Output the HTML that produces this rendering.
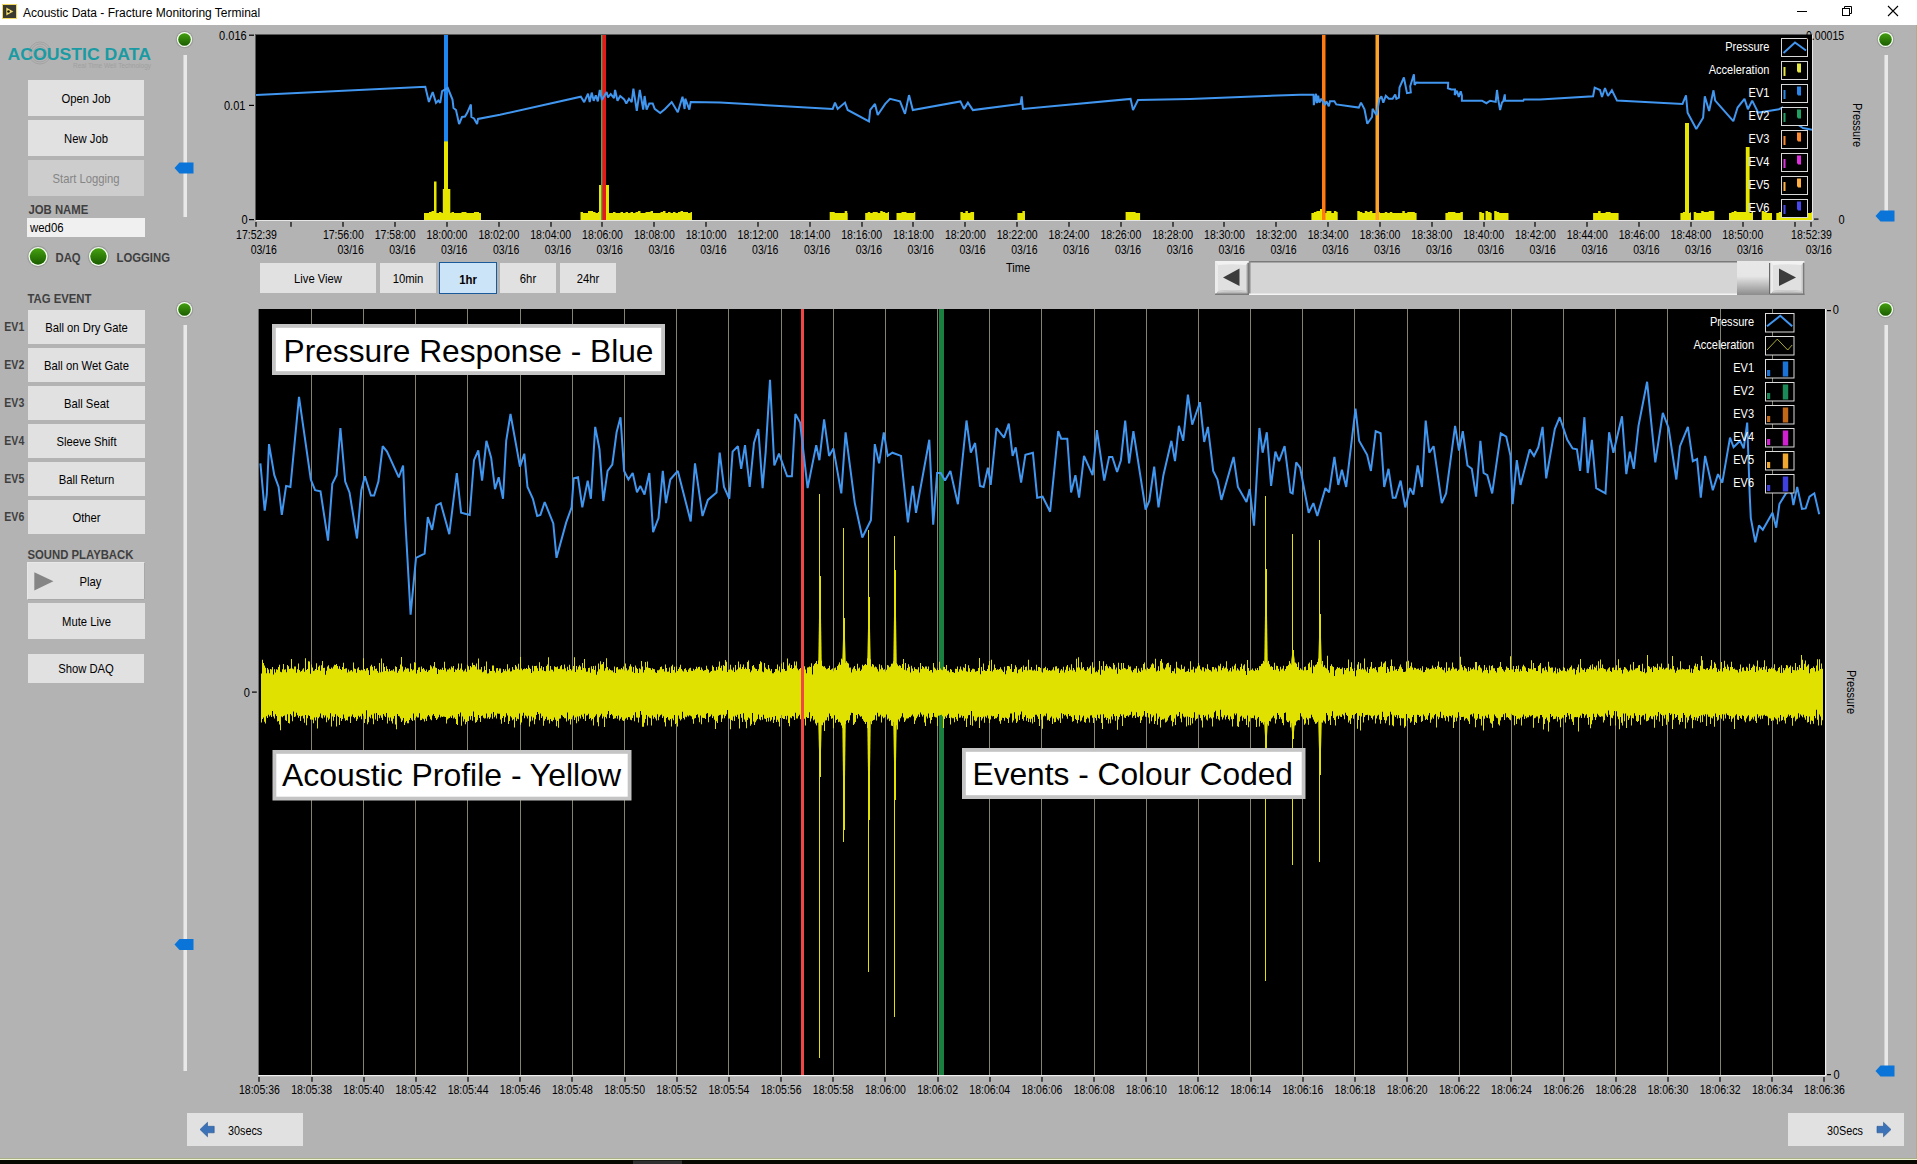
<!DOCTYPE html>
<html><head><meta charset="utf-8"><title>Acoustic Data - Fracture Monitoring Terminal</title>
<style>html,body{margin:0;padding:0;width:1917px;height:1164px;overflow:hidden;background:#b3b3b3;font-family:"Liberation Sans", sans-serif;}</style>
</head><body><svg width="1917" height="1164" viewBox="0 0 1917 1164" style="position:absolute;left:0;top:0;font-family:&quot;Liberation Sans&quot;, sans-serif" shape-rendering="auto"><rect x="0" y="0" width="1917" height="25" fill="#ffffff" /><rect x="2.5" y="4.5" width="14" height="14" fill="#3a3a30" stroke="#f0d860" stroke-width="1"/><path d="M6 7 L14 11.5 L6 16 Z" fill="#f5e070" stroke="#222" stroke-width="0.6"/><circle cx="8.5" cy="11.5" r="1.3" fill="#111"/><g transform="translate(23,17) scale(1.0,1)"><text x="0" y="0" font-size="12" fill="#000" text-anchor="start" font-weight="normal" >Acoustic Data - Fracture Monitoring Terminal</text></g><rect x="1797" y="11" width="10" height="1" fill="#000" /><rect x="1842.5" y="8.5" width="7" height="7" fill="none" stroke="#000" stroke-width="1"/><path d="M1844.5 8.5 V6.5 H1851.5 V13.5 H1849.5" fill="none" stroke="#000" stroke-width="1"/><path d="M1888 6 L1898 16 M1898 6 L1888 16" stroke="#000" stroke-width="1.1"/><g fill="none" stroke="#9a9a9a" stroke-width="0.8" opacity="0.8"><circle cx="40" cy="53" r="4"/><circle cx="40" cy="53" r="6.5"/><circle cx="40" cy="53" r="9"/><circle cx="40" cy="53" r="11"/></g><text x="7.5" y="59.6" font-size="16.2" font-weight="bold" fill="#1a9ba3" textLength="143.5" lengthAdjust="spacingAndGlyphs">ACOUSTIC DATA</text><text x="73" y="67.5" font-size="6.5" fill="#a0a0a0" textLength="78" lengthAdjust="spacingAndGlyphs">Real Time Well Technology</text><rect x="28" y="80" width="116" height="36" fill="#e1e1e1" /><g transform="translate(86.0,102.9) scale(0.94,1)"><text x="0" y="0" font-size="12" fill="#000" text-anchor="middle" font-weight="normal" >Open Job</text></g><rect x="28" y="120" width="116" height="36" fill="#e1e1e1" /><g transform="translate(86.0,142.9) scale(0.94,1)"><text x="0" y="0" font-size="12" fill="#000" text-anchor="middle" font-weight="normal" >New Job</text></g><rect x="28" y="160" width="116" height="36" fill="#cdcdcd" /><g transform="translate(86.0,182.9) scale(0.94,1)"><text x="0" y="0" font-size="12" fill="#858585" text-anchor="middle" font-weight="normal" >Start Logging</text></g><g transform="translate(28.5,214) scale(0.945,1)"><text x="0" y="0" font-size="12" fill="#3f3f3f" text-anchor="start" font-weight="bold" >JOB NAME</text></g><rect x="27" y="218" width="118" height="19" fill="#f0f0f0" /><g transform="translate(30,232) scale(0.95,1)"><text x="0" y="0" font-size="12" fill="#000" text-anchor="start" font-weight="normal" >wed06</text></g><circle cx="38" cy="256.5" r="10.7" fill="#000" opacity="0.12"/><circle cx="38" cy="256.5" r="9.5" fill="#f4fff0"/><circle cx="38" cy="256.5" r="8.2" fill="url(#ledg)"/><g transform="translate(55.5,262) scale(0.945,1)"><text x="0" y="0" font-size="12" fill="#3f3f3f" text-anchor="start" font-weight="bold" >DAQ</text></g><circle cx="98.5" cy="256.5" r="10.7" fill="#000" opacity="0.12"/><circle cx="98.5" cy="256.5" r="9.5" fill="#f4fff0"/><circle cx="98.5" cy="256.5" r="8.2" fill="url(#ledg)"/><g transform="translate(116.5,262) scale(0.945,1)"><text x="0" y="0" font-size="12" fill="#3f3f3f" text-anchor="start" font-weight="bold" >LOGGING</text></g><g transform="translate(27.5,302.7) scale(0.945,1)"><text x="0" y="0" font-size="12" fill="#3f3f3f" text-anchor="start" font-weight="bold" >TAG EVENT</text></g><rect x="28" y="310" width="117" height="34" fill="#e1e1e1" /><g transform="translate(86.5,331.9) scale(0.94,1)"><text x="0" y="0" font-size="12" fill="#000" text-anchor="middle" font-weight="normal" >Ball on Dry Gate</text></g><g transform="translate(4.3,331) scale(0.88,1)"><text x="0" y="0" font-size="12" fill="#3f3f3f" text-anchor="start" font-weight="bold" >EV1</text></g><rect x="28" y="348" width="117" height="34" fill="#e1e1e1" /><g transform="translate(86.5,369.9) scale(0.94,1)"><text x="0" y="0" font-size="12" fill="#000" text-anchor="middle" font-weight="normal" >Ball on Wet Gate</text></g><g transform="translate(4.3,369) scale(0.88,1)"><text x="0" y="0" font-size="12" fill="#3f3f3f" text-anchor="start" font-weight="bold" >EV2</text></g><rect x="28" y="386" width="117" height="34" fill="#e1e1e1" /><g transform="translate(86.5,407.9) scale(0.94,1)"><text x="0" y="0" font-size="12" fill="#000" text-anchor="middle" font-weight="normal" >Ball Seat</text></g><g transform="translate(4.3,407) scale(0.88,1)"><text x="0" y="0" font-size="12" fill="#3f3f3f" text-anchor="start" font-weight="bold" >EV3</text></g><rect x="28" y="424" width="117" height="34" fill="#e1e1e1" /><g transform="translate(86.5,445.9) scale(0.94,1)"><text x="0" y="0" font-size="12" fill="#000" text-anchor="middle" font-weight="normal" >Sleeve Shift</text></g><g transform="translate(4.3,445) scale(0.88,1)"><text x="0" y="0" font-size="12" fill="#3f3f3f" text-anchor="start" font-weight="bold" >EV4</text></g><rect x="28" y="462" width="117" height="34" fill="#e1e1e1" /><g transform="translate(86.5,483.9) scale(0.94,1)"><text x="0" y="0" font-size="12" fill="#000" text-anchor="middle" font-weight="normal" >Ball Return</text></g><g transform="translate(4.3,483) scale(0.88,1)"><text x="0" y="0" font-size="12" fill="#3f3f3f" text-anchor="start" font-weight="bold" >EV5</text></g><rect x="28" y="500" width="117" height="34" fill="#e1e1e1" /><g transform="translate(86.5,521.9) scale(0.94,1)"><text x="0" y="0" font-size="12" fill="#000" text-anchor="middle" font-weight="normal" >Other</text></g><g transform="translate(4.3,521) scale(0.88,1)"><text x="0" y="0" font-size="12" fill="#3f3f3f" text-anchor="start" font-weight="bold" >EV6</text></g><g transform="translate(27.5,558.6) scale(0.945,1)"><text x="0" y="0" font-size="12" fill="#3f3f3f" text-anchor="start" font-weight="bold" >SOUND PLAYBACK</text></g><rect x="27" y="562" width="118" height="38" fill="#e1e1e1" /><path d="M27.5 599.5 V562.5 H144.5" fill="none" stroke="#e8e8e8" stroke-width="1"/><path d="M27.5 599.5 H144.5 V562.5" fill="none" stroke="#a8a8a8" stroke-width="1"/><path d="M34.3 572.3 L53.4 581.3 L34.3 590.4 Z" fill="#858585"/><g transform="translate(90.5,585.5) scale(0.94,1)"><text x="0" y="0" font-size="12" fill="#000" text-anchor="middle" font-weight="normal" >Play</text></g><rect x="28" y="603" width="117" height="36" fill="#e1e1e1" /><g transform="translate(86.5,625.9) scale(0.94,1)"><text x="0" y="0" font-size="12" fill="#000" text-anchor="middle" font-weight="normal" >Mute Live</text></g><rect x="28" y="654" width="116" height="29" fill="#e1e1e1" /><g transform="translate(86.0,673.4) scale(0.94,1)"><text x="0" y="0" font-size="12" fill="#000" text-anchor="middle" font-weight="normal" >Show DAQ</text></g><circle cx="184.5" cy="39.5" r="8.799999999999999" fill="#000" opacity="0.12"/><circle cx="184.5" cy="39.5" r="7.6" fill="#f4fff0"/><circle cx="184.5" cy="39.5" r="6.3" fill="url(#ledg)"/><rect x="183" y="55" width="4" height="162" fill="#e8e8e8" /><rect x="183" y="55" width="1" height="162" fill="#d0d0d0"/><path d="M174.5 168 L179.5 162.5 H193.5 V173.5 H179.5 Z" fill="#0b74d9"/><circle cx="184.5" cy="309.5" r="8.799999999999999" fill="#000" opacity="0.12"/><circle cx="184.5" cy="309.5" r="7.6" fill="#f4fff0"/><circle cx="184.5" cy="309.5" r="6.3" fill="url(#ledg)"/><rect x="183" y="325" width="4" height="746" fill="#e8e8e8" /><rect x="183" y="325" width="1" height="746" fill="#d0d0d0"/><path d="M174.5 944.5 L179.5 939.0 H193.5 V950.0 H179.5 Z" fill="#0b74d9"/><circle cx="1885.5" cy="39.5" r="8.799999999999999" fill="#000" opacity="0.12"/><circle cx="1885.5" cy="39.5" r="7.6" fill="#f4fff0"/><circle cx="1885.5" cy="39.5" r="6.3" fill="url(#ledg)"/><rect x="1884" y="55" width="4" height="160" fill="#e8e8e8" /><rect x="1884" y="55" width="1" height="160" fill="#d0d0d0"/><path d="M1875.5 216 L1880.5 210.5 H1894.5 V221.5 H1880.5 Z" fill="#0b74d9"/><circle cx="1885.5" cy="309.5" r="8.799999999999999" fill="#000" opacity="0.12"/><circle cx="1885.5" cy="309.5" r="7.6" fill="#f4fff0"/><circle cx="1885.5" cy="309.5" r="6.3" fill="url(#ledg)"/><rect x="1884" y="325" width="4" height="741" fill="#e8e8e8" /><rect x="1884" y="325" width="1" height="741" fill="#d0d0d0"/><path d="M1875.5 1071 L1880.5 1065.5 H1894.5 V1076.5 H1880.5 Z" fill="#0b74d9"/><rect x="255" y="34" width="1557" height="186" fill="#5a5a5a" /><rect x="256" y="35" width="1556" height="185" fill="#000" /><rect x="256" y="220" width="1557" height="1" fill="#e6e6e6" /><rect x="1812" y="35" width="1" height="186" fill="#e6e6e6" /><clipPath id="ctop"><rect x="256" y="35" width="1556" height="185"/></clipPath><g clip-path="url(#ctop)"><polygon points="424.0,220.0 424.0,213.0 426.5,213.0 426.5,213.0 429.0,213.0 429.0,212.0 431.5,212.0 431.5,211.0 434.0,211.0 434.0,213.0 436.5,213.0 436.5,213.0 439.0,213.0 439.0,212.0 441.5,212.0 441.5,213.0 444.0,213.0 444.0,213.0 446.5,213.0 446.5,212.0 449.0,212.0 449.0,213.0 451.5,213.0 451.5,212.0 454.0,212.0 454.0,213.0 456.5,213.0 456.5,213.0 459.0,213.0 459.0,213.0 461.5,213.0 461.5,212.0 464.0,212.0 464.0,212.0 466.5,212.0 466.5,213.0 469.0,213.0 469.0,213.0 471.5,213.0 471.5,213.0 474.0,213.0 474.0,212.0 476.5,212.0 476.5,212.0 479.0,212.0 479.0,213.0 481.0,213.0 481.0,220.0" fill="#e6e600"/><polygon points="580.5,220.0 580.5,212.0 583.0,212.0 583.0,213.0 585.5,213.0 585.5,213.0 588.0,213.0 588.0,211.0 590.5,211.0 590.5,211.0 593.0,211.0 593.0,212.0 595.5,212.0 595.5,213.0 598.0,213.0 598.0,212.0 600.5,212.0 600.5,212.0 603.0,212.0 603.0,212.0 605.5,212.0 605.5,213.0 608.0,213.0 608.0,213.0 610.5,213.0 610.5,213.0 613.0,213.0 613.0,212.0 615.5,212.0 615.5,213.0 618.0,213.0 618.0,213.0 620.5,213.0 620.5,212.0 623.0,212.0 623.0,213.0 625.5,213.0 625.5,212.0 628.0,212.0 628.0,213.0 630.5,213.0 630.5,212.0 633.0,212.0 633.0,213.0 635.5,213.0 635.5,212.0 638.0,212.0 638.0,211.0 640.5,211.0 640.5,213.0 643.0,213.0 643.0,213.0 645.5,213.0 645.5,212.0 648.0,212.0 648.0,212.0 650.5,212.0 650.5,211.0 653.0,211.0 653.0,213.0 655.5,213.0 655.5,213.0 658.0,213.0 658.0,213.0 660.5,213.0 660.5,212.0 663.0,212.0 663.0,211.0 665.5,211.0 665.5,213.0 668.0,213.0 668.0,212.0 670.5,212.0 670.5,213.0 673.0,213.0 673.0,212.0 675.5,212.0 675.5,213.0 678.0,213.0 678.0,212.0 680.5,212.0 680.5,211.0 683.0,211.0 683.0,212.0 685.5,212.0 685.5,212.0 688.0,212.0 688.0,213.0 690.5,213.0 690.5,212.0 692.0,212.0 692.0,220.0" fill="#e6e600"/><polygon points="829.7,220.0 829.7,212.0 832.2,212.0 832.2,212.0 834.7,212.0 834.7,213.0 837.2,213.0 837.2,213.0 839.7,213.0 839.7,213.0 842.2,213.0 842.2,213.0 844.7,213.0 844.7,211.0 847.2,211.0 847.2,213.0 847.7,213.0 847.7,220.0" fill="#e6e600"/><polygon points="865.2,220.0 865.2,213.0 867.7,213.0 867.7,212.0 870.2,212.0 870.2,213.0 872.7,213.0 872.7,212.0 875.2,212.0 875.2,212.0 877.7,212.0 877.7,213.0 880.2,213.0 880.2,211.0 882.7,211.0 882.7,212.0 885.2,212.0 885.2,213.0 887.7,213.0 887.7,212.0 889.0,212.0 889.0,220.0" fill="#e6e600"/><polygon points="896.5,220.0 896.5,213.0 899.0,213.0 899.0,213.0 901.5,213.0 901.5,212.0 904.0,212.0 904.0,212.0 906.5,212.0 906.5,213.0 909.0,213.0 909.0,213.0 911.5,213.0 911.5,213.0 914.0,213.0 914.0,212.0 915.3,212.0 915.3,220.0" fill="#e6e600"/><polygon points="960.4,220.0 960.4,212.0 962.9,212.0 962.9,213.0 965.4,213.0 965.4,211.0 967.9,211.0 967.9,213.0 970.4,213.0 970.4,212.0 972.9,212.0 972.9,212.0 974.1,212.0 974.1,220.0" fill="#e6e600"/><polygon points="1017.4,220.0 1017.4,213.0 1019.9,213.0 1019.9,213.0 1022.4,213.0 1022.4,211.0 1024.9,211.0 1024.9,213.0 1025.0,213.0 1025.0,220.0" fill="#e6e600"/><polygon points="1125.6,220.0 1125.6,212.0 1128.1,212.0 1128.1,212.0 1130.6,212.0 1130.6,212.0 1133.1,212.0 1133.1,212.0 1135.6,212.0 1135.6,213.0 1138.1,213.0 1138.1,213.0 1140.1,213.0 1140.1,220.0" fill="#e6e600"/><polygon points="1311.4,220.0 1311.4,213.0 1313.9,213.0 1313.9,212.0 1316.4,212.0 1316.4,211.0 1318.9,211.0 1318.9,211.0 1321.4,211.0 1321.4,213.0 1323.9,213.0 1323.9,213.0 1326.4,213.0 1326.4,211.0 1328.9,211.0 1328.9,211.0 1331.4,211.0 1331.4,213.0 1333.9,213.0 1333.9,211.0 1336.4,211.0 1336.4,212.0 1337.7,212.0 1337.7,220.0" fill="#e6e600"/><polygon points="1357.3,220.0 1357.3,211.0 1359.8,211.0 1359.8,212.0 1362.3,212.0 1362.3,213.0 1364.8,213.0 1364.8,211.0 1367.3,211.0 1367.3,212.0 1369.8,212.0 1369.8,211.0 1372.3,211.0 1372.3,213.0 1374.8,213.0 1374.8,213.0 1377.3,213.0 1377.3,212.0 1379.8,212.0 1379.8,213.0 1382.3,213.0 1382.3,213.0 1384.8,213.0 1384.8,212.0 1387.3,212.0 1387.3,213.0 1389.8,213.0 1389.8,212.0 1392.3,212.0 1392.3,213.0 1394.8,213.0 1394.8,213.0 1397.3,213.0 1397.3,213.0 1399.8,213.0 1399.8,213.0 1402.3,213.0 1402.3,211.0 1404.8,211.0 1404.8,213.0 1407.3,213.0 1407.3,212.0 1409.8,212.0 1409.8,212.0 1412.3,212.0 1412.3,212.0 1414.8,212.0 1414.8,213.0 1416.6,213.0 1416.6,220.0" fill="#e6e600"/><polygon points="1445.4,220.0 1445.4,213.0 1447.9,213.0 1447.9,212.0 1450.4,212.0 1450.4,212.0 1452.9,212.0 1452.9,212.0 1455.4,212.0 1455.4,213.0 1457.9,213.0 1457.9,213.0 1460.4,213.0 1460.4,212.0 1462.9,212.0 1462.9,220.0" fill="#e6e600"/><polygon points="1479.2,220.0 1479.2,212.0 1481.7,212.0 1481.7,213.0 1484.2,213.0 1484.2,220.0" fill="#e6e600"/><polygon points="1485.5,220.0 1485.5,211.0 1488.0,211.0 1488.0,212.0 1490.5,212.0 1490.5,213.0 1491.7,213.0 1491.7,220.0" fill="#e6e600"/><polygon points="1494.2,220.0 1494.2,211.0 1496.7,211.0 1496.7,212.0 1499.2,212.0 1499.2,213.0 1501.7,213.0 1501.7,213.0 1504.2,213.0 1504.2,213.0 1506.7,213.0 1506.7,213.0 1508.5,213.0 1508.5,220.0" fill="#e6e600"/><polygon points="1593.1,220.0 1593.1,213.0 1595.6,213.0 1595.6,213.0 1598.1,213.0 1598.1,211.0 1600.6,211.0 1600.6,213.0 1603.1,213.0 1603.1,213.0 1605.6,213.0 1605.6,212.0 1608.1,212.0 1608.1,212.0 1610.6,212.0 1610.6,213.0 1613.1,213.0 1613.1,213.0 1615.6,213.0 1615.6,213.0 1618.1,213.0 1618.1,213.0 1618.6,213.0 1618.6,220.0" fill="#e6e600"/><polygon points="1680.4,220.0 1680.4,213.0 1682.9,213.0 1682.9,212.0 1685.4,212.0 1685.4,212.0 1687.9,212.0 1687.9,213.0 1690.4,213.0 1690.4,212.0 1691.0,212.0 1691.0,220.0" fill="#e6e600"/><polygon points="1693.7,220.0 1693.7,212.0 1696.2,212.0 1696.2,213.0 1698.7,213.0 1698.7,213.0 1701.2,213.0 1701.2,211.0 1703.7,211.0 1703.7,212.0 1706.2,212.0 1706.2,212.0 1708.7,212.0 1708.7,211.0 1711.2,211.0 1711.2,211.0 1713.7,211.0 1713.7,211.0 1714.3,211.0 1714.3,220.0" fill="#e6e600"/><polygon points="1729.0,220.0 1729.0,213.0 1731.5,213.0 1731.5,212.0 1734.0,212.0 1734.0,211.0 1736.5,211.0 1736.5,212.0 1739.0,212.0 1739.0,212.0 1741.5,212.0 1741.5,212.0 1744.0,212.0 1744.0,212.0 1746.5,212.0 1746.5,212.0 1749.0,212.0 1749.0,213.0 1751.5,213.0 1751.5,212.0 1753.0,212.0 1753.0,220.0" fill="#e6e600"/><polygon points="1761.7,220.0 1761.7,211.0 1764.2,211.0 1764.2,212.0 1766.7,212.0 1766.7,213.0 1769.2,213.0 1769.2,213.0 1771.7,213.0 1771.7,213.0 1772.0,213.0 1772.0,220.0" fill="#e6e600"/><polygon points="1776.3,220.0 1776.3,213.0 1778.8,213.0 1778.8,212.0 1781.3,212.0 1781.3,213.0 1783.8,213.0 1783.8,213.0 1786.3,213.0 1786.3,213.0 1788.8,213.0 1788.8,212.0 1791.3,212.0 1791.3,213.0 1793.8,213.0 1793.8,213.0 1796.3,213.0 1796.3,213.0 1798.8,213.0 1798.8,212.0 1801.3,212.0 1801.3,213.0 1803.8,213.0 1803.8,212.0 1806.3,212.0 1806.3,213.0 1808.8,213.0 1808.8,213.0 1811.3,213.0 1811.3,212.0 1812.0,212.0 1812.0,220.0" fill="#e6e600"/><rect x="444" y="35" width="4" height="185" fill="#1e86f0" /><rect x="434" y="181.5" width="2.5" height="38.5" fill="#e6e600" /><rect x="442.8" y="189" width="7.5" height="31" fill="#e6e600" /><rect x="444" y="141.4" width="4" height="78.6" fill="#e6e600" /><rect x="599" y="185" width="10" height="35" fill="#e6e600" /><rect x="1685" y="123" width="4" height="97" fill="#e6e600" /><rect x="1745.8" y="147" width="3.7999999999999545" height="73" fill="#e6e600" /><rect x="1320" y="209" width="4" height="11" fill="#e6e600" /><rect x="601" y="35" width="1" height="185" fill="#5aa060" /><rect x="602" y="35" width="1" height="185" fill="#a05030" /><rect x="603" y="35" width="3" height="185" fill="#e81818" /><rect x="1322" y="35" width="3.5" height="185" fill="#ff7a10" /><rect x="1375.5" y="35" width="3.5" height="185" fill="#ffa428" /><polyline points="256.0,95.1 425.3,86.8 428.9,101.9 432.7,92.0 436.0,102.9 438.3,100.5 440.2,102.9 442.1,91.1 447.8,88.0 452.5,99.6 453.5,108.0 456.0,110.0 459.1,124.1 462.0,117.0 465.0,116.5 467.2,112.8 470.9,104.5 471.4,117.0 474.0,118.5 477.1,124.1 478.0,118.9 500.0,114.7 580.8,96.7 584.2,102.1 588.0,93.6 589.7,102.0 591.7,92.6 593.7,100.8 595.8,95.3 597.8,101.4 599.8,89.9 601.9,100.0 606.6,92.0 608.0,97.4 610.7,94.0 614.0,98.0 615.1,89.9 617.5,100.8 620.2,96.0 624.2,99.4 626.3,103.5 629.0,98.7 631.7,102.1 633.4,88.6 636.8,110.9 639.8,89.9 643.2,109.6 644.6,96.0 646.6,109.6 649.3,103.5 652.7,103.5 654.7,108.9 660.2,113.0 665.0,109.0 671.7,102.1 677.8,112.3 682.5,96.7 684.6,109.0 685.3,98.7 689.3,109.6 690.7,102.1 720.0,102.6 832.7,108.9 835.0,102.6 837.7,108.9 845.0,102.6 847.7,110.0 869.0,121.4 870.2,110.0 875.0,103.9 877.7,115.0 885.2,103.9 890.0,98.9 900.0,101.4 905.0,113.9 909.0,95.1 912.8,110.1 960.4,101.4 964.0,108.9 967.9,102.6 972.9,110.1 1020.5,103.9 1021.7,96.3 1022.9,108.9 1130.6,98.9 1133.0,110.1 1138.0,100.0 1190.0,98.9 1300.0,94.7 1313.5,94.7 1313.8,105.1 1316.0,93.8 1316.9,103.2 1318.2,95.7 1319.4,102.6 1321.3,98.8 1324.7,105.1 1326.3,101.3 1328.8,106.3 1330.0,101.3 1334.4,101.3 1336.3,104.4 1358.8,107.6 1361.0,102.6 1364.5,109.4 1367.3,123.8 1372.0,117.0 1372.6,108.8 1376.4,115.1 1379.5,98.8 1381.4,96.3 1383.3,102.6 1385.8,95.7 1388.9,98.8 1392.6,98.8 1395.2,94.4 1396.4,98.8 1398.9,97.6 1399.5,87.5 1403.9,77.5 1407.0,93.2 1410.8,92.5 1410.2,86.3 1413.9,74.4 1414.6,85.0 1416.4,82.5 1420.0,82.8 1448.2,82.8 1447.9,88.2 1451.3,89.4 1455.0,89.4 1454.7,95.0 1456.9,90.7 1458.8,96.9 1460.7,91.3 1461.9,95.7 1461.9,100.7 1482.0,100.7 1486.4,103.2 1490.1,100.7 1495.7,101.9 1497.0,90.0 1498.2,99.4 1500.1,110.1 1502.0,102.6 1503.3,101.3 1504.8,94.4 1505.1,100.7 1523.3,100.7 1524.0,99.4 1540.0,99.4 1593.1,96.3 1594.7,87.7 1600.0,90.0 1602.0,97.0 1605.0,88.0 1608.0,96.0 1611.9,90.3 1617.0,100.6 1682.5,104.0 1686.0,95.4 1687.6,112.6 1696.3,129.0 1703.1,117.8 1704.8,96.3 1709.1,111.0 1713.5,90.3 1715.2,100.6 1733.3,121.2 1737.6,107.5 1744.5,98.9 1747.9,109.2 1752.2,100.6 1758.2,112.6 1768.5,110.9 1778.9,109.2 1782.3,107.5 1790.0,118.0 1797.0,124.0 1803.0,128.1 1812.0,129.8" fill="none" stroke="#4196f0" stroke-width="2" stroke-linejoin="miter" stroke-miterlimit="2" /></g><g transform="translate(1769.4,50.8) scale(0.92,1)"><text x="0" y="0" font-size="12" fill="#ffffff" text-anchor="end" font-weight="normal" >Pressure</text></g><rect x="1781.5" y="38.5" width="26" height="18" fill="#000" stroke="#d8d8d8" stroke-width="1"/><polyline points="1783.5,53.0 1795.0,42.5 1806.0,50.5" fill="none" stroke="#4196f0" stroke-width="2" stroke-linejoin="miter" stroke-miterlimit="2" /><g transform="translate(1769.4,73.8) scale(0.92,1)"><text x="0" y="0" font-size="12" fill="#ffffff" text-anchor="end" font-weight="normal" >Acceleration</text></g><rect x="1781.5" y="61.5" width="26" height="18" fill="#000" stroke="#d8d8d8" stroke-width="1"/><rect x="1783.5" y="67.0" width="2" height="9" fill="#e6e640" /><path d="M1797 63.5 h4 v9 h-3 l-1 -1.5 z" fill="#e6e640"/><g transform="translate(1769.4,96.8) scale(0.92,1)"><text x="0" y="0" font-size="12" fill="#ffffff" text-anchor="end" font-weight="normal" >EV1</text></g><rect x="1781.5" y="84.5" width="26" height="18" fill="#000" stroke="#d8d8d8" stroke-width="1"/><rect x="1783.5" y="90.0" width="2" height="9" fill="#2a86e8" /><path d="M1797 86.5 h4 v9 h-3 l-1 -1.5 z" fill="#2a86e8"/><g transform="translate(1769.4,119.8) scale(0.92,1)"><text x="0" y="0" font-size="12" fill="#ffffff" text-anchor="end" font-weight="normal" >EV2</text></g><rect x="1781.5" y="107.5" width="26" height="18" fill="#000" stroke="#d8d8d8" stroke-width="1"/><rect x="1783.5" y="113.0" width="2" height="9" fill="#20a060" /><path d="M1797 109.5 h4 v9 h-3 l-1 -1.5 z" fill="#20a060"/><g transform="translate(1769.4,142.8) scale(0.92,1)"><text x="0" y="0" font-size="12" fill="#ffffff" text-anchor="end" font-weight="normal" >EV3</text></g><rect x="1781.5" y="130.5" width="26" height="18" fill="#000" stroke="#d8d8d8" stroke-width="1"/><rect x="1783.5" y="136.0" width="2" height="9" fill="#ff8a30" /><path d="M1797 132.5 h4 v9 h-3 l-1 -1.5 z" fill="#ff8a30"/><g transform="translate(1769.4,165.8) scale(0.92,1)"><text x="0" y="0" font-size="12" fill="#ffffff" text-anchor="end" font-weight="normal" >EV4</text></g><rect x="1781.5" y="153.5" width="26" height="18" fill="#000" stroke="#d8d8d8" stroke-width="1"/><rect x="1783.5" y="159.0" width="2" height="9" fill="#e030e0" /><path d="M1797 155.5 h4 v9 h-3 l-1 -1.5 z" fill="#e030e0"/><g transform="translate(1769.4,188.8) scale(0.92,1)"><text x="0" y="0" font-size="12" fill="#ffffff" text-anchor="end" font-weight="normal" >EV5</text></g><rect x="1781.5" y="176.5" width="26" height="18" fill="#000" stroke="#d8d8d8" stroke-width="1"/><rect x="1783.5" y="182.0" width="2" height="9" fill="#ffb040" /><path d="M1797 178.5 h4 v9 h-3 l-1 -1.5 z" fill="#ffb040"/><g transform="translate(1769.4,211.8) scale(0.92,1)"><text x="0" y="0" font-size="12" fill="#ffffff" text-anchor="end" font-weight="normal" >EV6</text></g><rect x="1781.5" y="199.5" width="26" height="18" fill="#000" stroke="#d8d8d8" stroke-width="1"/><rect x="1783.5" y="205.0" width="2" height="9" fill="#4848f0" /><path d="M1797 201.5 h4 v9 h-3 l-1 -1.5 z" fill="#4848f0"/><g transform="translate(246.7,39.8) scale(0.92,1)"><text x="0" y="0" font-size="12" fill="#000" text-anchor="end" font-weight="normal" >0.016</text></g><rect x="249" y="34.6" width="5" height="1.2" fill="#000" /><g transform="translate(245.4,109.8) scale(0.92,1)"><text x="0" y="0" font-size="12" fill="#000" text-anchor="end" font-weight="normal" >0.01</text></g><rect x="249" y="104.8" width="5" height="1.2" fill="#000" /><g transform="translate(247.6,223.5) scale(0.92,1)"><text x="0" y="0" font-size="12" fill="#000" text-anchor="end" font-weight="normal" >0</text></g><rect x="249" y="219" width="5" height="1.2" fill="#000" /><g transform="translate(1806,40) scale(0.88,1)"><text x="0" y="0" font-size="12" fill="#000" text-anchor="start" font-weight="normal" >0.00015</text></g><g transform="translate(1838.4,223.5) scale(0.92,1)"><text x="0" y="0" font-size="12" fill="#000" text-anchor="start" font-weight="normal" >0</text></g><rect x="1814" y="218.5" width="4.5" height="1.2" fill="#000" /><g transform="translate(1852.5,125) rotate(90)"><g transform="scale(0.92,1)"><text x="0" y="0" font-size="12" text-anchor="middle" fill="#000">Pressure</text></g></g><rect x="255.4" y="222" width="1.2" height="4.8" fill="#000" /><g transform="translate(276.9,238.7) scale(0.875,1)"><text x="0" y="0" font-size="12" fill="#000" text-anchor="end" font-weight="normal" >17:52:39</text></g><g transform="translate(276.9,253.9) scale(0.875,1)"><text x="0" y="0" font-size="12" fill="#000" text-anchor="end" font-weight="normal" >03/16</text></g><rect x="290.4" y="222" width="1.2" height="4.8" fill="#000" /><rect x="342.4" y="222" width="1.2" height="4.8" fill="#000" /><g transform="translate(363.72074399999997,238.7) scale(0.875,1)"><text x="0" y="0" font-size="12" fill="#000" text-anchor="end" font-weight="normal" >17:56:00</text></g><g transform="translate(363.72074399999997,253.9) scale(0.875,1)"><text x="0" y="0" font-size="12" fill="#000" text-anchor="end" font-weight="normal" >03/16</text></g><rect x="394.4" y="222" width="1.2" height="4.8" fill="#000" /><g transform="translate(415.55402399999997,238.7) scale(0.875,1)"><text x="0" y="0" font-size="12" fill="#000" text-anchor="end" font-weight="normal" >17:58:00</text></g><g transform="translate(415.55402399999997,253.9) scale(0.875,1)"><text x="0" y="0" font-size="12" fill="#000" text-anchor="end" font-weight="normal" >03/16</text></g><rect x="446.4" y="222" width="1.2" height="4.8" fill="#000" /><g transform="translate(467.387304,238.7) scale(0.875,1)"><text x="0" y="0" font-size="12" fill="#000" text-anchor="end" font-weight="normal" >18:00:00</text></g><g transform="translate(467.387304,253.9) scale(0.875,1)"><text x="0" y="0" font-size="12" fill="#000" text-anchor="end" font-weight="normal" >03/16</text></g><rect x="498.4" y="222" width="1.2" height="4.8" fill="#000" /><g transform="translate(519.220584,238.7) scale(0.875,1)"><text x="0" y="0" font-size="12" fill="#000" text-anchor="end" font-weight="normal" >18:02:00</text></g><g transform="translate(519.220584,253.9) scale(0.875,1)"><text x="0" y="0" font-size="12" fill="#000" text-anchor="end" font-weight="normal" >03/16</text></g><rect x="550.4" y="222" width="1.2" height="4.8" fill="#000" /><g transform="translate(571.053864,238.7) scale(0.875,1)"><text x="0" y="0" font-size="12" fill="#000" text-anchor="end" font-weight="normal" >18:04:00</text></g><g transform="translate(571.053864,253.9) scale(0.875,1)"><text x="0" y="0" font-size="12" fill="#000" text-anchor="end" font-weight="normal" >03/16</text></g><rect x="601.4" y="222" width="1.2" height="4.8" fill="#000" /><g transform="translate(622.8871439999999,238.7) scale(0.875,1)"><text x="0" y="0" font-size="12" fill="#000" text-anchor="end" font-weight="normal" >18:06:00</text></g><g transform="translate(622.8871439999999,253.9) scale(0.875,1)"><text x="0" y="0" font-size="12" fill="#000" text-anchor="end" font-weight="normal" >03/16</text></g><rect x="653.4" y="222" width="1.2" height="4.8" fill="#000" /><g transform="translate(674.720424,238.7) scale(0.875,1)"><text x="0" y="0" font-size="12" fill="#000" text-anchor="end" font-weight="normal" >18:08:00</text></g><g transform="translate(674.720424,253.9) scale(0.875,1)"><text x="0" y="0" font-size="12" fill="#000" text-anchor="end" font-weight="normal" >03/16</text></g><rect x="705.4" y="222" width="1.2" height="4.8" fill="#000" /><g transform="translate(726.553704,238.7) scale(0.875,1)"><text x="0" y="0" font-size="12" fill="#000" text-anchor="end" font-weight="normal" >18:10:00</text></g><g transform="translate(726.553704,253.9) scale(0.875,1)"><text x="0" y="0" font-size="12" fill="#000" text-anchor="end" font-weight="normal" >03/16</text></g><rect x="757.4" y="222" width="1.2" height="4.8" fill="#000" /><g transform="translate(778.386984,238.7) scale(0.875,1)"><text x="0" y="0" font-size="12" fill="#000" text-anchor="end" font-weight="normal" >18:12:00</text></g><g transform="translate(778.386984,253.9) scale(0.875,1)"><text x="0" y="0" font-size="12" fill="#000" text-anchor="end" font-weight="normal" >03/16</text></g><rect x="809.4" y="222" width="1.2" height="4.8" fill="#000" /><g transform="translate(830.2202639999999,238.7) scale(0.875,1)"><text x="0" y="0" font-size="12" fill="#000" text-anchor="end" font-weight="normal" >18:14:00</text></g><g transform="translate(830.2202639999999,253.9) scale(0.875,1)"><text x="0" y="0" font-size="12" fill="#000" text-anchor="end" font-weight="normal" >03/16</text></g><rect x="861.4" y="222" width="1.2" height="4.8" fill="#000" /><g transform="translate(882.053544,238.7) scale(0.875,1)"><text x="0" y="0" font-size="12" fill="#000" text-anchor="end" font-weight="normal" >18:16:00</text></g><g transform="translate(882.053544,253.9) scale(0.875,1)"><text x="0" y="0" font-size="12" fill="#000" text-anchor="end" font-weight="normal" >03/16</text></g><rect x="912.4" y="222" width="1.2" height="4.8" fill="#000" /><g transform="translate(933.8868239999999,238.7) scale(0.875,1)"><text x="0" y="0" font-size="12" fill="#000" text-anchor="end" font-weight="normal" >18:18:00</text></g><g transform="translate(933.8868239999999,253.9) scale(0.875,1)"><text x="0" y="0" font-size="12" fill="#000" text-anchor="end" font-weight="normal" >03/16</text></g><rect x="964.4" y="222" width="1.2" height="4.8" fill="#000" /><g transform="translate(985.720104,238.7) scale(0.875,1)"><text x="0" y="0" font-size="12" fill="#000" text-anchor="end" font-weight="normal" >18:20:00</text></g><g transform="translate(985.720104,253.9) scale(0.875,1)"><text x="0" y="0" font-size="12" fill="#000" text-anchor="end" font-weight="normal" >03/16</text></g><rect x="1016.4" y="222" width="1.2" height="4.8" fill="#000" /><g transform="translate(1037.553384,238.7) scale(0.875,1)"><text x="0" y="0" font-size="12" fill="#000" text-anchor="end" font-weight="normal" >18:22:00</text></g><g transform="translate(1037.553384,253.9) scale(0.875,1)"><text x="0" y="0" font-size="12" fill="#000" text-anchor="end" font-weight="normal" >03/16</text></g><rect x="1068.4" y="222" width="1.2" height="4.8" fill="#000" /><g transform="translate(1089.386664,238.7) scale(0.875,1)"><text x="0" y="0" font-size="12" fill="#000" text-anchor="end" font-weight="normal" >18:24:00</text></g><g transform="translate(1089.386664,253.9) scale(0.875,1)"><text x="0" y="0" font-size="12" fill="#000" text-anchor="end" font-weight="normal" >03/16</text></g><rect x="1120.4" y="222" width="1.2" height="4.8" fill="#000" /><g transform="translate(1141.219944,238.7) scale(0.875,1)"><text x="0" y="0" font-size="12" fill="#000" text-anchor="end" font-weight="normal" >18:26:00</text></g><g transform="translate(1141.219944,253.9) scale(0.875,1)"><text x="0" y="0" font-size="12" fill="#000" text-anchor="end" font-weight="normal" >03/16</text></g><rect x="1172.4" y="222" width="1.2" height="4.8" fill="#000" /><g transform="translate(1193.0532240000002,238.7) scale(0.875,1)"><text x="0" y="0" font-size="12" fill="#000" text-anchor="end" font-weight="normal" >18:28:00</text></g><g transform="translate(1193.0532240000002,253.9) scale(0.875,1)"><text x="0" y="0" font-size="12" fill="#000" text-anchor="end" font-weight="normal" >03/16</text></g><rect x="1223.4" y="222" width="1.2" height="4.8" fill="#000" /><g transform="translate(1244.886504,238.7) scale(0.875,1)"><text x="0" y="0" font-size="12" fill="#000" text-anchor="end" font-weight="normal" >18:30:00</text></g><g transform="translate(1244.886504,253.9) scale(0.875,1)"><text x="0" y="0" font-size="12" fill="#000" text-anchor="end" font-weight="normal" >03/16</text></g><rect x="1275.4" y="222" width="1.2" height="4.8" fill="#000" /><g transform="translate(1296.7197840000001,238.7) scale(0.875,1)"><text x="0" y="0" font-size="12" fill="#000" text-anchor="end" font-weight="normal" >18:32:00</text></g><g transform="translate(1296.7197840000001,253.9) scale(0.875,1)"><text x="0" y="0" font-size="12" fill="#000" text-anchor="end" font-weight="normal" >03/16</text></g><rect x="1327.4" y="222" width="1.2" height="4.8" fill="#000" /><g transform="translate(1348.5530640000002,238.7) scale(0.875,1)"><text x="0" y="0" font-size="12" fill="#000" text-anchor="end" font-weight="normal" >18:34:00</text></g><g transform="translate(1348.5530640000002,253.9) scale(0.875,1)"><text x="0" y="0" font-size="12" fill="#000" text-anchor="end" font-weight="normal" >03/16</text></g><rect x="1379.4" y="222" width="1.2" height="4.8" fill="#000" /><g transform="translate(1400.386344,238.7) scale(0.875,1)"><text x="0" y="0" font-size="12" fill="#000" text-anchor="end" font-weight="normal" >18:36:00</text></g><g transform="translate(1400.386344,253.9) scale(0.875,1)"><text x="0" y="0" font-size="12" fill="#000" text-anchor="end" font-weight="normal" >03/16</text></g><rect x="1431.4" y="222" width="1.2" height="4.8" fill="#000" /><g transform="translate(1452.219624,238.7) scale(0.875,1)"><text x="0" y="0" font-size="12" fill="#000" text-anchor="end" font-weight="normal" >18:38:00</text></g><g transform="translate(1452.219624,253.9) scale(0.875,1)"><text x="0" y="0" font-size="12" fill="#000" text-anchor="end" font-weight="normal" >03/16</text></g><rect x="1483.4" y="222" width="1.2" height="4.8" fill="#000" /><g transform="translate(1504.0529040000001,238.7) scale(0.875,1)"><text x="0" y="0" font-size="12" fill="#000" text-anchor="end" font-weight="normal" >18:40:00</text></g><g transform="translate(1504.0529040000001,253.9) scale(0.875,1)"><text x="0" y="0" font-size="12" fill="#000" text-anchor="end" font-weight="normal" >03/16</text></g><rect x="1534.4" y="222" width="1.2" height="4.8" fill="#000" /><g transform="translate(1555.8861840000002,238.7) scale(0.875,1)"><text x="0" y="0" font-size="12" fill="#000" text-anchor="end" font-weight="normal" >18:42:00</text></g><g transform="translate(1555.8861840000002,253.9) scale(0.875,1)"><text x="0" y="0" font-size="12" fill="#000" text-anchor="end" font-weight="normal" >03/16</text></g><rect x="1586.4" y="222" width="1.2" height="4.8" fill="#000" /><g transform="translate(1607.719464,238.7) scale(0.875,1)"><text x="0" y="0" font-size="12" fill="#000" text-anchor="end" font-weight="normal" >18:44:00</text></g><g transform="translate(1607.719464,253.9) scale(0.875,1)"><text x="0" y="0" font-size="12" fill="#000" text-anchor="end" font-weight="normal" >03/16</text></g><rect x="1638.4" y="222" width="1.2" height="4.8" fill="#000" /><g transform="translate(1659.552744,238.7) scale(0.875,1)"><text x="0" y="0" font-size="12" fill="#000" text-anchor="end" font-weight="normal" >18:46:00</text></g><g transform="translate(1659.552744,253.9) scale(0.875,1)"><text x="0" y="0" font-size="12" fill="#000" text-anchor="end" font-weight="normal" >03/16</text></g><rect x="1690.4" y="222" width="1.2" height="4.8" fill="#000" /><g transform="translate(1711.3860240000001,238.7) scale(0.875,1)"><text x="0" y="0" font-size="12" fill="#000" text-anchor="end" font-weight="normal" >18:48:00</text></g><g transform="translate(1711.3860240000001,253.9) scale(0.875,1)"><text x="0" y="0" font-size="12" fill="#000" text-anchor="end" font-weight="normal" >03/16</text></g><rect x="1742.4" y="222" width="1.2" height="4.8" fill="#000" /><g transform="translate(1763.219304,238.7) scale(0.875,1)"><text x="0" y="0" font-size="12" fill="#000" text-anchor="end" font-weight="normal" >18:50:00</text></g><g transform="translate(1763.219304,253.9) scale(0.875,1)"><text x="0" y="0" font-size="12" fill="#000" text-anchor="end" font-weight="normal" >03/16</text></g><rect x="1794.4" y="222" width="1.2" height="4.8" fill="#000" /><rect x="1810.4" y="222" width="1.2" height="4.8" fill="#000" /><g transform="translate(1831.8984,238.7) scale(0.875,1)"><text x="0" y="0" font-size="12" fill="#000" text-anchor="end" font-weight="normal" >18:52:39</text></g><g transform="translate(1831.8984,253.9) scale(0.875,1)"><text x="0" y="0" font-size="12" fill="#000" text-anchor="end" font-weight="normal" >03/16</text></g><g transform="translate(1006,271.5) scale(0.92,1)"><text x="0" y="0" font-size="12" fill="#000" text-anchor="start" font-weight="normal" >Time</text></g><rect x="260" y="263" width="116" height="30" fill="#e1e1e1" /><g transform="translate(318.0,282.9) scale(0.94,1)"><text x="0" y="0" font-size="12" fill="#000" text-anchor="middle" font-weight="normal" >Live View</text></g><rect x="380" y="263" width="56" height="30" fill="#e1e1e1" /><g transform="translate(408.0,282.9) scale(0.94,1)"><text x="0" y="0" font-size="12" fill="#000" text-anchor="middle" font-weight="normal" >10min</text></g><rect x="439.5" y="262.5" width="57" height="31" fill="#cce4f7" stroke="#1a5a9a" stroke-width="1"/><g transform="translate(468,283.5) scale(0.95,1)"><text x="0" y="0" font-size="12" fill="#000" text-anchor="middle" font-weight="bold" >1hr</text></g><rect x="500" y="263" width="56" height="30" fill="#e1e1e1" /><g transform="translate(528.0,282.9) scale(0.94,1)"><text x="0" y="0" font-size="12" fill="#000" text-anchor="middle" font-weight="normal" >6hr</text></g><rect x="560" y="263" width="56" height="30" fill="#e1e1e1" /><g transform="translate(588.0,282.9) scale(0.94,1)"><text x="0" y="0" font-size="12" fill="#000" text-anchor="middle" font-weight="normal" >24hr</text></g><defs><linearGradient id="btng" x1="0" y1="0" x2="0" y2="1"><stop offset="0" stop-color="#f0f0f0"/><stop offset="0.8" stop-color="#dcdcdc"/><stop offset="1" stop-color="#a8a8a8"/></linearGradient><linearGradient id="thg" x1="0" y1="0" x2="0" y2="1"><stop offset="0" stop-color="#e8e8e8"/><stop offset="0.45" stop-color="#e6e6e6"/><stop offset="1" stop-color="#8c8c8c"/></linearGradient><linearGradient id="ledg" x1="0" y1="0" x2="0" y2="1"><stop offset="0" stop-color="#44a010"/><stop offset="1" stop-color="#1a5c00"/></linearGradient></defs><rect x="1249" y="261" width="488" height="34" fill="#d5d5d5" /><rect x="1249" y="261" width="488" height="1.5" fill="#7a7a7a" /><rect x="1249" y="261" width="1.5" height="34" fill="#8a8a8a" /><rect x="1249" y="293.5" width="488" height="1.5" fill="#f4f4f4" /><rect x="1215" y="261" width="34" height="34" fill="#e0e0e0"/><path d="M1215 261 H1249 L1246 265 Q1232.0 263.5 1218 265 Z" fill="#f2f2f2"/><path d="M1215 295 H1249 L1246 291 Q1232.0 289 1218 291 Z" fill="#b8b8b8"/><path d="M1218 291 Q1232.0 289 1246 291 L1246 292.5 Q1232.0 290.5 1218 292.5 Z" fill="#cfcfcf"/><path d="M1215 261 L1218 265 V291 L1215 295 Z" fill="#ececec"/><path d="M1249 261 L1246 265 V291 L1249 295 Z" fill="#c4c4c4"/><rect x="1247.5" y="263" width="1.5" height="32" fill="#7a7a7a"/><rect x="1215" y="293.5" width="34" height="1.5" fill="#7a7a7a"/><path d="M1223 277.5 L1239.5 268.5 L1239.5 286 Z" fill="#3c3c3c"/><rect x="1737" y="261" width="33" height="34" fill="url(#thg)"/><rect x="1770" y="261" width="34.5" height="34" fill="#e0e0e0"/><path d="M1770 261 H1804.5 L1801.5 265 Q1787.25 263.5 1773 265 Z" fill="#f2f2f2"/><path d="M1770 295 H1804.5 L1801.5 291 Q1787.25 289 1773 291 Z" fill="#b8b8b8"/><path d="M1773 291 Q1787.25 289 1801.5 291 L1801.5 292.5 Q1787.25 290.5 1773 292.5 Z" fill="#cfcfcf"/><path d="M1770 261 L1773 265 V291 L1770 295 Z" fill="#ececec"/><path d="M1804.5 261 L1801.5 265 V291 L1804.5 295 Z" fill="#c4c4c4"/><rect x="1803.0" y="263" width="1.5" height="32" fill="#7a7a7a"/><rect x="1770" y="293.5" width="34.5" height="1.5" fill="#7a7a7a"/><rect x="1769" y="263" width="1.2" height="31" fill="#6a6a6a" /><path d="M1779 268.5 L1796 277.5 L1779 286 Z" fill="#3c3c3c"/><rect x="258" y="309" width="1567" height="766" fill="#000" /><rect x="258" y="309" width="1" height="766" fill="#6e6e6e" /><rect x="258" y="1075" width="1568" height="1.2" fill="#eeeeee" /><rect x="1825" y="309" width="1.2" height="767" fill="#eeeeee" /><clipPath id="cmain"><rect x="259" y="309" width="1566" height="766"/></clipPath><g clip-path="url(#cmain)"><rect x="311" y="309" width="1" height="766" fill="#868270" /><rect x="363" y="309" width="1" height="766" fill="#868270" /><rect x="415" y="309" width="1" height="766" fill="#868270" /><rect x="467" y="309" width="1" height="766" fill="#868270" /><rect x="520" y="309" width="1" height="766" fill="#868270" /><rect x="572" y="309" width="1" height="766" fill="#868270" /><rect x="624" y="309" width="1" height="766" fill="#868270" /><rect x="676" y="309" width="1" height="766" fill="#868270" /><rect x="728" y="309" width="1" height="766" fill="#868270" /><rect x="781" y="309" width="1" height="766" fill="#868270" /><rect x="833" y="309" width="1" height="766" fill="#868270" /><rect x="885" y="309" width="1" height="766" fill="#868270" /><rect x="937" y="309" width="1" height="766" fill="#868270" /><rect x="989" y="309" width="1" height="766" fill="#868270" /><rect x="1041" y="309" width="1" height="766" fill="#868270" /><rect x="1094" y="309" width="1" height="766" fill="#868270" /><rect x="1146" y="309" width="1" height="766" fill="#868270" /><rect x="1198" y="309" width="1" height="766" fill="#868270" /><rect x="1250" y="309" width="1" height="766" fill="#868270" /><rect x="1302" y="309" width="1" height="766" fill="#868270" /><rect x="1354" y="309" width="1" height="766" fill="#868270" /><rect x="1407" y="309" width="1" height="766" fill="#868270" /><rect x="1459" y="309" width="1" height="766" fill="#868270" /><rect x="1511" y="309" width="1" height="766" fill="#868270" /><rect x="1563" y="309" width="1" height="766" fill="#868270" /><rect x="1615" y="309" width="1" height="766" fill="#868270" /><rect x="1667" y="309" width="1" height="766" fill="#868270" /><rect x="1720" y="309" width="1" height="766" fill="#868270" /><rect x="1772" y="309" width="1" height="766" fill="#868270" /><rect x="939" y="309" width="5" height="766" fill="#1a8040" /><polygon points="261,673.4 262,673.4 262,659.7 263,659.7 263,662.9 264,662.9 264,665.5 265,665.5 265,667.8 266,667.8 266,673.3 267,673.3 267,668.1 268,668.1 268,669.4 269,669.4 269,673.3 270,673.3 270,668.9 271,668.9 271,669.5 272,669.5 272,667.1 273,667.1 273,674.5 274,674.5 274,669.2 275,669.2 275,672.4 276,672.4 276,669.3 277,669.3 277,669.7 278,669.7 278,667.0 279,667.0 279,664.7 280,664.7 280,671.8 281,671.8 281,672.2 282,672.2 282,669.3 283,669.3 283,663.9 284,663.9 284,669.7 285,669.7 285,669.2 286,669.2 286,672.3 287,672.3 287,664.9 288,664.9 288,666.3 289,666.3 289,669.1 290,669.1 290,668.6 291,668.6 291,659.0 292,659.0 292,668.4 293,668.4 293,669.3 294,669.3 294,666.4 295,666.4 295,666.5 296,666.5 296,672.7 297,672.7 297,669.2 298,669.2 298,663.4 299,663.4 299,670.0 300,670.0 300,671.8 301,671.8 301,671.1 302,671.1 302,669.6 303,669.6 303,668.2 304,668.2 304,671.8 305,671.8 305,658.2 306,658.2 306,670.0 307,670.0 307,668.9 308,668.9 308,661.2 309,661.2 309,661.6 310,661.6 310,673.7 311,673.7 311,664.6 312,664.6 312,667.5 313,667.5 313,670.9 314,670.9 314,670.4 315,670.4 315,669.1 316,669.1 316,663.3 317,663.3 317,669.9 318,669.9 318,666.7 319,666.7 319,665.6 320,665.6 320,670.7 321,670.7 321,665.2 322,665.2 322,660.9 323,660.9 323,668.1 324,668.1 324,667.8 325,667.8 325,674.7 326,674.7 326,670.8 327,670.8 327,666.4 328,666.4 328,665.3 329,665.3 329,668.5 330,668.5 330,669.0 331,669.0 331,667.5 332,667.5 332,668.6 333,668.6 333,666.5 334,666.5 334,664.8 335,664.8 335,665.0 336,665.0 336,663.9 337,663.9 337,666.1 338,666.1 338,668.8 339,668.8 339,666.3 340,666.3 340,669.0 341,669.0 341,670.0 342,670.0 342,667.1 343,667.1 343,662.8 344,662.8 344,668.9 345,668.9 345,668.6 346,668.6 346,668.3 347,668.3 347,672.4 348,672.4 348,669.4 349,669.4 349,671.4 350,671.4 350,670.4 351,670.4 351,670.1 352,670.1 352,671.6 353,671.6 353,662.6 354,662.6 354,668.6 355,668.6 355,669.1 356,669.1 356,672.7 357,672.7 357,668.5 358,668.5 358,667.2 359,667.2 359,670.0 360,670.0 360,670.5 361,670.5 361,669.8 362,669.8 362,670.2 363,670.2 363,658.3 364,658.3 364,669.1 365,669.1 365,670.7 366,670.7 366,668.6 367,668.6 367,668.1 368,668.1 368,670.3 369,670.3 369,675.1 370,675.1 370,666.3 371,666.3 371,664.8 372,664.8 372,666.7 373,666.7 373,670.6 374,670.6 374,666.0 375,666.0 375,669.0 376,669.0 376,668.4 377,668.4 377,671.0 378,671.0 378,672.7 379,672.7 379,662.9 380,662.9 380,672.3 381,672.3 381,658.6 382,658.6 382,671.8 383,671.8 383,663.3 384,663.3 384,667.1 385,667.1 385,670.9 386,670.9 386,666.2 387,666.2 387,669.1 388,669.1 388,671.6 389,671.6 389,668.9 390,668.9 390,671.0 391,671.0 391,670.3 392,670.3 392,670.6 393,670.6 393,669.2 394,669.2 394,671.5 395,671.5 395,666.2 396,666.2 396,667.1 397,667.1 397,672.7 398,672.7 398,670.8 399,670.8 399,669.0 400,669.0 400,664.6 401,664.6 401,656.9 402,656.9 402,666.5 403,666.5 403,671.4 404,671.4 404,669.7 405,669.7 405,667.2 406,667.2 406,668.8 407,668.8 407,668.2 408,668.2 408,668.6 409,668.6 409,671.7 410,671.7 410,663.6 411,663.6 411,669.0 412,669.0 412,670.6 413,670.6 413,669.4 414,669.4 414,662.3 415,662.3 415,662.7 416,662.7 416,673.5 417,673.5 417,669.9 418,669.9 418,667.5 419,667.5 419,667.3 420,667.3 420,672.1 421,672.1 421,666.5 422,666.5 422,669.0 423,669.0 423,668.0 424,668.0 424,669.5 425,669.5 425,671.0 426,671.0 426,669.5 427,669.5 427,671.9 428,671.9 428,670.6 429,670.6 429,670.0 430,670.0 430,665.2 431,665.2 431,666.4 432,666.4 432,668.4 433,668.4 433,666.2 434,666.2 434,662.0 435,662.0 435,667.5 436,667.5 436,667.9 437,667.9 437,673.9 438,673.9 438,669.1 439,669.1 439,670.0 440,670.0 440,669.2 441,669.2 441,669.8 442,669.8 442,667.8 443,667.8 443,669.9 444,669.9 444,661.8 445,661.8 445,668.3 446,668.3 446,671.5 447,671.5 447,669.4 448,669.4 448,669.6 449,669.6 449,668.2 450,668.2 450,669.5 451,669.5 451,666.5 452,666.5 452,667.7 453,667.7 453,666.1 454,666.1 454,672.0 455,672.0 455,669.3 456,669.3 456,669.9 457,669.9 457,668.4 458,668.4 458,663.4 459,663.4 459,670.1 460,670.1 460,668.5 461,668.5 461,663.5 462,663.5 462,669.7 463,669.7 463,671.5 464,671.5 464,670.6 465,670.6 465,668.8 466,668.8 466,671.7 467,671.7 467,664.7 468,664.7 468,666.2 469,666.2 469,669.8 470,669.8 470,665.9 471,665.9 471,667.2 472,667.2 472,662.7 473,662.7 473,664.9 474,664.9 474,665.1 475,665.1 475,666.6 476,666.6 476,663.6 477,663.6 477,669.5 478,669.5 478,658.6 479,658.6 479,669.6 480,669.6 480,669.4 481,669.4 481,667.1 482,667.1 482,672.3 483,672.3 483,671.6 484,671.6 484,666.3 485,666.3 485,669.9 486,669.9 486,661.6 487,661.6 487,673.4 488,673.4 488,673.2 489,673.2 489,668.9 490,668.9 490,670.9 491,670.9 491,671.0 492,671.0 492,665.4 493,665.4 493,665.4 494,665.4 494,670.7 495,670.7 495,672.4 496,672.4 496,668.2 497,668.2 497,667.9 498,667.9 498,670.8 499,670.8 499,668.5 500,668.5 500,668.4 501,668.4 501,673.0 502,673.0 502,672.3 503,672.3 503,668.9 504,668.9 504,670.7 505,670.7 505,669.3 506,669.3 506,671.3 507,671.3 507,664.2 508,664.2 508,669.5 509,669.5 509,668.3 510,668.3 510,671.5 511,671.5 511,671.2 512,671.2 512,667.0 513,667.0 513,669.6 514,669.6 514,670.1 515,670.1 515,665.1 516,665.1 516,666.6 517,666.6 517,668.7 518,668.7 518,663.7 519,663.7 519,669.7 520,669.7 520,657.0 521,657.0 521,668.6 522,668.6 522,670.2 523,670.2 523,669.1 524,669.1 524,668.4 525,668.4 525,668.9 526,668.9 526,668.0 527,668.0 527,669.1 528,669.1 528,665.2 529,665.2 529,667.7 530,667.7 530,668.9 531,668.9 531,672.9 532,672.9 532,665.8 533,665.8 533,671.2 534,671.2 534,665.9 535,665.9 535,666.0 536,666.0 536,665.7 537,665.7 537,668.2 538,668.2 538,671.0 539,671.0 539,662.3 540,662.3 540,668.3 541,668.3 541,666.1 542,666.1 542,670.3 543,670.3 543,667.0 544,667.0 544,671.0 545,671.0 545,671.3 546,671.3 546,665.9 547,665.9 547,664.5 548,664.5 548,657.2 549,657.2 549,670.7 550,670.7 550,666.0 551,666.0 551,669.6 552,669.6 552,669.8 553,669.8 553,671.6 554,671.6 554,666.2 555,666.2 555,667.1 556,667.1 556,667.2 557,667.2 557,666.4 558,666.4 558,668.9 559,668.9 559,668.7 560,668.7 560,666.2 561,666.2 561,664.9 562,664.9 562,669.3 563,669.3 563,669.3 564,669.3 564,664.6 565,664.6 565,668.3 566,668.3 566,671.3 567,671.3 567,666.7 568,666.7 568,670.1 569,670.1 569,664.8 570,664.8 570,669.1 571,669.1 571,670.6 572,670.6 572,669.2 573,669.2 573,666.0 574,666.0 574,657.3 575,657.3 575,672.0 576,672.0 576,666.0 577,666.0 577,669.5 578,669.5 578,666.7 579,666.7 579,665.3 580,665.3 580,666.5 581,666.5 581,670.0 582,670.0 582,663.0 583,663.0 583,668.1 584,668.1 584,659.1 585,659.1 585,668.3 586,668.3 586,671.7 587,671.7 587,671.6 588,671.6 588,668.0 589,668.0 589,667.8 590,667.8 590,672.7 591,672.7 591,666.2 592,666.2 592,668.9 593,668.9 593,666.1 594,666.1 594,670.1 595,670.1 595,665.8 596,665.8 596,674.7 597,674.7 597,671.5 598,671.5 598,663.5 599,663.5 599,669.3 600,669.3 600,661.2 601,661.2 601,664.4 602,664.4 602,664.0 603,664.0 603,662.0 604,662.0 604,670.7 605,670.7 605,668.2 606,668.2 606,658.2 607,658.2 607,667.1 608,667.1 608,670.2 609,670.2 609,668.8 610,668.8 610,669.9 611,669.9 611,670.5 612,670.5 612,670.6 613,670.6 613,672.2 614,672.2 614,666.4 615,666.4 615,673.0 616,673.0 616,667.4 617,667.4 617,667.1 618,667.1 618,669.4 619,669.4 619,669.3 620,669.3 620,669.5 621,669.5 621,668.1 622,668.1 622,669.3 623,669.3 623,666.5 624,666.5 624,670.4 625,670.4 625,663.6 626,663.6 626,668.3 627,668.3 627,670.6 628,670.6 628,669.6 629,669.6 629,666.2 630,666.2 630,664.2 631,664.2 631,666.4 632,666.4 632,671.7 633,671.7 633,667.0 634,667.0 634,673.1 635,673.1 635,665.5 636,665.5 636,667.8 637,667.8 637,669.1 638,669.1 638,672.9 639,672.9 639,668.2 640,668.2 640,669.2 641,669.2 641,660.9 642,660.9 642,666.4 643,666.4 643,672.5 644,672.5 644,669.9 645,669.9 645,662.0 646,662.0 646,667.3 647,667.3 647,661.6 648,661.6 648,667.8 649,667.8 649,667.9 650,667.9 650,668.3 651,668.3 651,669.9 652,669.9 652,668.3 653,668.3 653,668.9 654,668.9 654,669.3 655,669.3 655,672.3 656,672.3 656,673.0 657,673.0 657,670.3 658,670.3 658,670.3 659,670.3 659,669.4 660,669.4 660,667.0 661,667.0 661,666.4 662,666.4 662,669.2 663,669.2 663,668.9 664,668.9 664,671.4 665,671.4 665,664.6 666,664.6 666,668.1 667,668.1 667,671.7 668,671.7 668,671.5 669,671.5 669,667.5 670,667.5 670,673.1 671,673.1 671,666.3 672,666.3 672,664.7 673,664.7 673,670.0 674,670.0 674,666.7 675,666.7 675,672.5 676,672.5 676,666.4 677,666.4 677,670.9 678,670.9 678,669.0 679,669.0 679,667.2 680,667.2 680,664.8 681,664.8 681,669.1 682,669.1 682,670.6 683,670.6 683,671.5 684,671.5 684,669.0 685,669.0 685,668.2 686,668.2 686,670.2 687,670.2 687,671.9 688,671.9 688,669.4 689,669.4 689,668.2 690,668.2 690,667.8 691,667.8 691,670.7 692,670.7 692,671.1 693,671.1 693,668.7 694,668.7 694,670.2 695,670.2 695,669.0 696,669.0 696,666.8 697,666.8 697,668.4 698,668.4 698,667.1 699,667.1 699,666.8 700,666.8 700,670.0 701,670.0 701,667.6 702,667.6 702,669.4 703,669.4 703,671.0 704,671.0 704,670.2 705,670.2 705,670.1 706,670.1 706,665.8 707,665.8 707,668.7 708,668.7 708,669.8 709,669.8 709,672.7 710,672.7 710,671.8 711,671.8 711,671.1 712,671.1 712,665.6 713,665.6 713,667.0 714,667.0 714,670.5 715,670.5 715,670.8 716,670.8 716,667.1 717,667.1 717,669.7 718,669.7 718,666.6 719,666.6 719,661.4 720,661.4 720,668.1 721,668.1 721,665.8 722,665.8 722,670.7 723,670.7 723,665.0 724,665.0 724,666.1 725,666.1 725,660.1 726,660.1 726,661.8 727,661.8 727,671.9 728,671.9 728,670.0 729,670.0 729,669.5 730,669.5 730,664.8 731,664.8 731,669.4 732,669.4 732,670.6 733,670.6 733,667.4 734,667.4 734,671.9 735,671.9 735,665.0 736,665.0 736,670.3 737,670.3 737,669.3 738,669.3 738,661.4 739,661.4 739,667.6 740,667.6 740,664.2 741,664.2 741,669.0 742,669.0 742,667.1 743,667.1 743,664.5 744,664.5 744,669.1 745,669.1 745,667.4 746,667.4 746,669.1 747,669.1 747,662.1 748,662.1 748,660.4 749,660.4 749,669.0 750,669.0 750,672.2 751,672.2 751,670.5 752,670.5 752,665.9 753,665.9 753,665.0 754,665.0 754,667.4 755,667.4 755,668.7 756,668.7 756,669.1 757,669.1 757,670.9 758,670.9 758,669.3 759,669.3 759,664.1 760,664.1 760,661.2 761,661.2 761,662.3 762,662.3 762,671.5 763,671.5 763,672.2 764,672.2 764,663.1 765,663.1 765,667.6 766,667.6 766,669.0 767,669.0 767,669.5 768,669.5 768,664.9 769,664.9 769,668.5 770,668.5 770,670.8 771,670.8 771,668.9 772,668.9 772,673.2 773,673.2 773,673.2 774,673.2 774,672.0 775,672.0 775,669.0 776,669.0 776,668.9 777,668.9 777,664.5 778,664.5 778,670.5 779,670.5 779,666.6 780,666.6 780,672.3 781,672.3 781,663.4 782,663.4 782,669.0 783,669.0 783,662.3 784,662.3 784,669.1 785,669.1 785,670.9 786,670.9 786,670.8 787,670.8 787,658.5 788,658.5 788,665.4 789,665.4 789,663.4 790,663.4 790,668.0 791,668.0 791,665.1 792,665.1 792,669.0 793,669.0 793,668.0 794,668.0 794,661.5 795,661.5 795,665.4 796,665.4 796,661.4 797,661.4 797,668.6 798,668.6 798,670.2 799,670.2 799,668.9 800,668.9 800,668.1 801,668.1 801,663.4 802,663.4 802,670.5 803,670.5 803,661.6 804,661.6 804,666.3 805,666.3 805,669.5 806,669.5 806,673.2 807,673.2 807,667.4 808,667.4 808,667.2 809,667.2 809,666.4 810,666.4 810,667.1 811,667.1 811,663.3 812,663.3 812,674.5 813,674.5 813,672.1 814,672.1 814,664.1 815,664.1 815,668.4 816,668.4 816,661.0 817,661.0 817,667.0 818,667.0 818,668.1 819,668.1 819,668.0 820,668.0 820,671.2 821,671.2 821,667.5 822,667.5 822,668.2 823,668.2 823,670.8 824,670.8 824,674.1 825,674.1 825,668.0 826,668.0 826,669.2 827,669.2 827,668.7 828,668.7 828,667.9 829,667.9 829,665.8 830,665.8 830,669.9 831,669.9 831,669.3 832,669.3 832,668.6 833,668.6 833,671.2 834,671.2 834,668.2 835,668.2 835,667.4 836,667.4 836,670.1 837,670.1 837,668.1 838,668.1 838,667.5 839,667.5 839,670.5 840,670.5 840,670.4 841,670.4 841,659.0 842,659.0 842,666.1 843,666.1 843,667.3 844,667.3 844,666.2 845,666.2 845,671.9 846,671.9 846,662.6 847,662.6 847,668.6 848,668.6 848,663.6 849,663.6 849,669.6 850,669.6 850,667.6 851,667.6 851,672.6 852,672.6 852,669.3 853,669.3 853,667.4 854,667.4 854,666.1 855,666.1 855,669.1 856,669.1 856,670.7 857,670.7 857,663.8 858,663.8 858,668.6 859,668.6 859,667.5 860,667.5 860,671.1 861,671.1 861,669.6 862,669.6 862,664.7 863,664.7 863,668.6 864,668.6 864,665.5 865,665.5 865,664.0 866,664.0 866,668.4 867,668.4 867,671.2 868,671.2 868,667.3 869,667.3 869,662.7 870,662.7 870,667.7 871,667.7 871,668.6 872,668.6 872,669.7 873,669.7 873,664.7 874,664.7 874,672.4 875,672.4 875,666.6 876,666.6 876,667.2 877,667.2 877,669.3 878,669.3 878,671.4 879,671.4 879,664.2 880,664.2 880,669.3 881,669.3 881,665.2 882,665.2 882,667.7 883,667.7 883,669.8 884,669.8 884,669.3 885,669.3 885,671.6 886,671.6 886,669.8 887,669.8 887,664.9 888,664.9 888,669.5 889,669.5 889,673.6 890,673.6 890,669.0 891,669.0 891,670.1 892,670.1 892,670.5 893,670.5 893,670.2 894,670.2 894,668.6 895,668.6 895,670.8 896,670.8 896,665.0 897,665.0 897,666.6 898,666.6 898,667.2 899,667.2 899,666.4 900,666.4 900,668.6 901,668.6 901,668.0 902,668.0 902,663.9 903,663.9 903,659.1 904,659.1 904,669.8 905,669.8 905,663.0 906,663.0 906,670.6 907,670.6 907,668.1 908,668.1 908,664.2 909,664.2 909,666.8 910,666.8 910,672.4 911,672.4 911,665.8 912,665.8 912,668.6 913,668.6 913,671.1 914,671.1 914,667.3 915,667.3 915,668.9 916,668.9 916,669.3 917,669.3 917,669.6 918,669.6 918,667.3 919,667.3 919,672.6 920,672.6 920,663.0 921,663.0 921,668.9 922,668.9 922,666.0 923,666.0 923,667.1 924,667.1 924,668.5 925,668.5 925,666.5 926,666.5 926,666.4 927,666.4 927,669.1 928,669.1 928,666.4 929,666.4 929,671.1 930,671.1 930,669.9 931,669.9 931,669.9 932,669.9 932,672.4 933,672.4 933,663.0 934,663.0 934,667.4 935,667.4 935,668.7 936,668.7 936,670.3 937,670.3 937,668.3 938,668.3 938,669.9 939,669.9 939,661.8 940,661.8 940,668.6 941,668.6 941,669.8 942,669.8 942,670.3 943,670.3 943,666.7 944,666.7 944,667.0 945,667.0 945,669.0 946,669.0 946,664.9 947,664.9 947,670.8 948,670.8 948,670.5 949,670.5 949,672.2 950,672.2 950,669.1 951,669.1 951,669.8 952,669.8 952,672.1 953,672.1 953,672.2 954,672.2 954,673.1 955,673.1 955,668.8 956,668.8 956,668.9 957,668.9 957,666.5 958,666.5 958,671.7 959,671.7 959,669.2 960,669.2 960,666.5 961,666.5 961,669.5 962,669.5 962,670.8 963,670.8 963,667.2 964,667.2 964,668.1 965,668.1 965,664.1 966,664.1 966,671.2 967,671.2 967,671.7 968,671.7 968,665.3 969,665.3 969,668.2 970,668.2 970,672.0 971,672.0 971,670.2 972,670.2 972,668.8 973,668.8 973,668.8 974,668.8 974,669.3 975,669.3 975,671.8 976,671.8 976,671.3 977,671.3 977,671.1 978,671.1 978,668.1 979,668.1 979,658.0 980,658.0 980,674.2 981,674.2 981,666.9 982,666.9 982,671.1 983,671.1 983,663.5 984,663.5 984,669.9 985,669.9 985,671.0 986,671.0 986,670.9 987,670.9 987,668.9 988,668.9 988,665.2 989,665.2 989,660.9 990,660.9 990,671.0 991,671.0 991,659.7 992,659.7 992,671.5 993,671.5 993,669.8 994,669.8 994,664.6 995,664.6 995,668.0 996,668.0 996,670.1 997,670.1 997,669.3 998,669.3 998,669.7 999,669.7 999,669.0 1000,669.0 1000,667.2 1001,667.2 1001,669.3 1002,669.3 1002,670.5 1003,670.5 1003,672.0 1004,672.0 1004,666.8 1005,666.8 1005,674.2 1006,674.2 1006,670.4 1007,670.4 1007,666.0 1008,666.0 1008,666.1 1009,666.1 1009,666.4 1010,666.4 1010,669.0 1011,669.0 1011,663.9 1012,663.9 1012,672.0 1013,672.0 1013,671.7 1014,671.7 1014,668.9 1015,668.9 1015,665.2 1016,665.2 1016,667.3 1017,667.3 1017,673.3 1018,673.3 1018,669.8 1019,669.8 1019,669.2 1020,669.2 1020,668.5 1021,668.5 1021,666.9 1022,666.9 1022,671.7 1023,671.7 1023,665.5 1024,665.5 1024,670.1 1025,670.1 1025,667.1 1026,667.1 1026,666.4 1027,666.4 1027,670.5 1028,670.5 1028,659.8 1029,659.8 1029,669.7 1030,669.7 1030,669.7 1031,669.7 1031,667.0 1032,667.0 1032,670.4 1033,670.4 1033,670.4 1034,670.4 1034,669.6 1035,669.6 1035,670.7 1036,670.7 1036,664.8 1037,664.8 1037,671.0 1038,671.0 1038,667.1 1039,667.1 1039,666.9 1040,666.9 1040,667.9 1041,667.9 1041,671.8 1042,671.8 1042,672.5 1043,672.5 1043,668.4 1044,668.4 1044,667.9 1045,667.9 1045,666.8 1046,666.8 1046,670.1 1047,670.1 1047,668.2 1048,668.2 1048,670.8 1049,670.8 1049,669.9 1050,669.9 1050,670.7 1051,670.7 1051,670.4 1052,670.4 1052,669.6 1053,669.6 1053,667.3 1054,667.3 1054,670.4 1055,670.4 1055,666.5 1056,666.5 1056,666.2 1057,666.2 1057,668.7 1058,668.7 1058,668.3 1059,668.3 1059,673.0 1060,673.0 1060,670.6 1061,670.6 1061,669.1 1062,669.1 1062,670.4 1063,670.4 1063,666.7 1064,666.7 1064,672.4 1065,672.4 1065,669.7 1066,669.7 1066,666.4 1067,666.4 1067,664.9 1068,664.9 1068,671.0 1069,671.0 1069,667.4 1070,667.4 1070,669.7 1071,669.7 1071,664.3 1072,664.3 1072,670.4 1073,670.4 1073,668.1 1074,668.1 1074,669.8 1075,669.8 1075,671.7 1076,671.7 1076,658.8 1077,658.8 1077,667.4 1078,667.4 1078,657.3 1079,657.3 1079,667.6 1080,667.6 1080,669.8 1081,669.8 1081,662.3 1082,662.3 1082,668.3 1083,668.3 1083,667.1 1084,667.1 1084,669.7 1085,669.7 1085,670.9 1086,670.9 1086,670.6 1087,670.6 1087,667.1 1088,667.1 1088,668.7 1089,668.7 1089,667.6 1090,667.6 1090,665.8 1091,665.8 1091,673.7 1092,673.7 1092,662.2 1093,662.2 1093,667.8 1094,667.8 1094,666.8 1095,666.8 1095,672.2 1096,672.2 1096,671.2 1097,671.2 1097,672.3 1098,672.3 1098,669.7 1099,669.7 1099,661.0 1100,661.0 1100,674.8 1101,674.8 1101,666.0 1102,666.0 1102,669.7 1103,669.7 1103,661.2 1104,661.2 1104,670.8 1105,670.8 1105,665.9 1106,665.9 1106,664.2 1107,664.2 1107,666.2 1108,666.2 1108,668.2 1109,668.2 1109,666.3 1110,666.3 1110,667.0 1111,667.0 1111,668.4 1112,668.4 1112,669.3 1113,669.3 1113,663.0 1114,663.0 1114,664.8 1115,664.8 1115,669.6 1116,669.6 1116,667.4 1117,667.4 1117,673.7 1118,673.7 1118,662.7 1119,662.7 1119,669.1 1120,669.1 1120,670.1 1121,670.1 1121,663.0 1122,663.0 1122,668.8 1123,668.8 1123,663.0 1124,663.0 1124,668.0 1125,668.0 1125,668.4 1126,668.4 1126,669.6 1127,669.6 1127,669.1 1128,669.1 1128,665.3 1129,665.3 1129,666.8 1130,666.8 1130,666.6 1131,666.6 1131,670.4 1132,670.4 1132,672.3 1133,672.3 1133,670.0 1134,670.0 1134,668.5 1135,668.5 1135,668.6 1136,668.6 1136,666.1 1137,666.1 1137,672.7 1138,672.7 1138,668.6 1139,668.6 1139,670.7 1140,670.7 1140,672.0 1141,672.0 1141,667.8 1142,667.8 1142,670.3 1143,670.3 1143,664.0 1144,664.0 1144,662.6 1145,662.6 1145,669.3 1146,669.3 1146,670.4 1147,670.4 1147,667.7 1148,667.7 1148,669.0 1149,669.0 1149,668.7 1150,668.7 1150,667.3 1151,667.3 1151,664.6 1152,664.6 1152,663.2 1153,663.2 1153,664.3 1154,664.3 1154,668.1 1155,668.1 1155,658.7 1156,658.7 1156,671.4 1157,671.4 1157,670.4 1158,670.4 1158,666.2 1159,666.2 1159,671.1 1160,671.1 1160,661.0 1161,661.0 1161,659.0 1162,659.0 1162,662.7 1163,662.7 1163,668.5 1164,668.5 1164,669.5 1165,669.5 1165,667.4 1166,667.4 1166,664.2 1167,664.2 1167,662.9 1168,662.9 1168,662.8 1169,662.8 1169,667.2 1170,667.2 1170,664.9 1171,664.9 1171,673.1 1172,673.1 1172,671.1 1173,671.1 1173,671.2 1174,671.2 1174,668.4 1175,668.4 1175,673.6 1176,673.6 1176,661.7 1177,661.7 1177,667.4 1178,667.4 1178,668.3 1179,668.3 1179,668.7 1180,668.7 1180,669.7 1181,669.7 1181,664.7 1182,664.7 1182,669.0 1183,669.0 1183,668.8 1184,668.8 1184,666.4 1185,666.4 1185,672.1 1186,672.1 1186,671.6 1187,671.6 1187,670.9 1188,670.9 1188,668.8 1189,668.8 1189,672.0 1190,672.0 1190,661.3 1191,661.3 1191,669.7 1192,669.7 1192,669.6 1193,669.6 1193,666.8 1194,666.8 1194,672.5 1195,672.5 1195,668.4 1196,668.4 1196,668.6 1197,668.6 1197,666.6 1198,666.6 1198,663.0 1199,663.0 1199,665.6 1200,665.6 1200,669.3 1201,669.3 1201,670.4 1202,670.4 1202,667.2 1203,667.2 1203,667.2 1204,667.2 1204,671.5 1205,671.5 1205,668.2 1206,668.2 1206,669.3 1207,669.3 1207,664.3 1208,664.3 1208,668.8 1209,668.8 1209,670.1 1210,670.1 1210,670.2 1211,670.2 1211,671.6 1212,671.6 1212,666.9 1213,666.9 1213,667.1 1214,667.1 1214,669.4 1215,669.4 1215,667.4 1216,667.4 1216,668.5 1217,668.5 1217,671.6 1218,671.6 1218,665.5 1219,665.5 1219,666.2 1220,666.2 1220,663.7 1221,663.7 1221,670.2 1222,670.2 1222,668.0 1223,668.0 1223,666.3 1224,666.3 1224,668.4 1225,668.4 1225,667.6 1226,667.6 1226,661.2 1227,661.2 1227,668.7 1228,668.7 1228,671.4 1229,671.4 1229,670.3 1230,670.3 1230,667.9 1231,667.9 1231,671.4 1232,671.4 1232,666.6 1233,666.6 1233,669.3 1234,669.3 1234,665.4 1235,665.4 1235,663.7 1236,663.7 1236,670.6 1237,670.6 1237,668.3 1238,668.3 1238,669.6 1239,669.6 1239,670.8 1240,670.8 1240,666.9 1241,666.9 1241,663.8 1242,663.8 1242,668.9 1243,668.9 1243,665.6 1244,665.6 1244,664.2 1245,664.2 1245,670.9 1246,670.9 1246,675.0 1247,675.0 1247,660.1 1248,660.1 1248,668.1 1249,668.1 1249,670.7 1250,670.7 1250,670.2 1251,670.2 1251,669.7 1252,669.7 1252,668.4 1253,668.4 1253,670.3 1254,670.3 1254,671.1 1255,671.1 1255,668.4 1256,668.4 1256,670.0 1257,670.0 1257,668.1 1258,668.1 1258,670.2 1259,670.2 1259,670.7 1260,670.7 1260,670.9 1261,670.9 1261,665.3 1262,665.3 1262,671.4 1263,671.4 1263,667.6 1264,667.6 1264,670.9 1265,670.9 1265,669.1 1266,669.1 1266,672.5 1267,672.5 1267,668.9 1268,668.9 1268,670.8 1269,670.8 1269,666.6 1270,666.6 1270,672.3 1271,672.3 1271,668.6 1272,668.6 1272,667.1 1273,667.1 1273,670.0 1274,670.0 1274,662.8 1275,662.8 1275,669.7 1276,669.7 1276,665.8 1277,665.8 1277,665.9 1278,665.9 1278,668.8 1279,668.8 1279,671.3 1280,671.3 1280,666.7 1281,666.7 1281,669.5 1282,669.5 1282,668.6 1283,668.6 1283,665.8 1284,665.8 1284,670.7 1285,670.7 1285,668.9 1286,668.9 1286,671.3 1287,671.3 1287,670.3 1288,670.3 1288,668.8 1289,668.8 1289,668.4 1290,668.4 1290,665.4 1291,665.4 1291,665.5 1292,665.5 1292,664.3 1293,664.3 1293,673.4 1294,673.4 1294,667.9 1295,667.9 1295,666.3 1296,666.3 1296,666.7 1297,666.7 1297,667.1 1298,667.1 1298,662.3 1299,662.3 1299,669.9 1300,669.9 1300,668.2 1301,668.2 1301,669.6 1302,669.6 1302,669.7 1303,669.7 1303,670.5 1304,670.5 1304,667.1 1305,667.1 1305,666.4 1306,666.4 1306,670.2 1307,670.2 1307,670.0 1308,670.0 1308,663.7 1309,663.7 1309,662.6 1310,662.6 1310,667.3 1311,667.3 1311,660.0 1312,660.0 1312,673.3 1313,673.3 1313,665.6 1314,665.6 1314,668.2 1315,668.2 1315,670.2 1316,670.2 1316,669.7 1317,669.7 1317,671.6 1318,671.6 1318,667.2 1319,667.2 1319,666.9 1320,666.9 1320,664.0 1321,664.0 1321,667.9 1322,667.9 1322,668.9 1323,668.9 1323,671.3 1324,671.3 1324,669.6 1325,669.6 1325,668.3 1326,668.3 1326,668.6 1327,668.6 1327,655.7 1328,655.7 1328,670.3 1329,670.3 1329,672.7 1330,672.7 1330,665.9 1331,665.9 1331,664.2 1332,664.2 1332,666.3 1333,666.3 1333,667.0 1334,667.0 1334,676.1 1335,676.1 1335,670.2 1336,670.2 1336,668.8 1337,668.8 1337,666.9 1338,666.9 1338,667.9 1339,667.9 1339,667.4 1340,667.4 1340,668.9 1341,668.9 1341,668.8 1342,668.8 1342,667.6 1343,667.6 1343,674.3 1344,674.3 1344,668.1 1345,668.1 1345,670.0 1346,670.0 1346,668.3 1347,668.3 1347,668.0 1348,668.0 1348,659.6 1349,659.6 1349,671.2 1350,671.2 1350,667.0 1351,667.0 1351,662.2 1352,662.2 1352,668.7 1353,668.7 1353,671.1 1354,671.1 1354,668.0 1355,668.0 1355,676.2 1356,676.2 1356,670.3 1357,670.3 1357,664.6 1358,664.6 1358,662.1 1359,662.1 1359,668.9 1360,668.9 1360,663.2 1361,663.2 1361,669.5 1362,669.5 1362,668.3 1363,668.3 1363,669.5 1364,669.5 1364,658.4 1365,658.4 1365,669.4 1366,669.4 1366,671.5 1367,671.5 1367,667.2 1368,667.2 1368,673.0 1369,673.0 1369,668.9 1370,668.9 1370,666.7 1371,666.7 1371,662.1 1372,662.1 1372,668.8 1373,668.8 1373,667.9 1374,667.9 1374,668.5 1375,668.5 1375,666.9 1376,666.9 1376,670.3 1377,670.3 1377,672.2 1378,672.2 1378,667.2 1379,667.2 1379,667.1 1380,667.1 1380,666.2 1381,666.2 1381,661.7 1382,661.7 1382,667.0 1383,667.0 1383,663.4 1384,663.4 1384,662.4 1385,662.4 1385,661.3 1386,661.3 1386,673.1 1387,673.1 1387,667.1 1388,667.1 1388,668.7 1389,668.7 1389,671.8 1390,671.8 1390,666.1 1391,666.1 1391,659.4 1392,659.4 1392,666.0 1393,666.0 1393,670.7 1394,670.7 1394,666.5 1395,666.5 1395,669.8 1396,669.8 1396,669.1 1397,669.1 1397,671.1 1398,671.1 1398,669.1 1399,669.1 1399,666.5 1400,666.5 1400,664.4 1401,664.4 1401,667.3 1402,667.3 1402,669.0 1403,669.0 1403,671.9 1404,671.9 1404,672.1 1405,672.1 1405,671.4 1406,671.4 1406,661.4 1407,661.4 1407,668.5 1408,668.5 1408,660.7 1409,660.7 1409,668.1 1410,668.1 1410,666.3 1411,666.3 1411,662.5 1412,662.5 1412,667.6 1413,667.6 1413,669.7 1414,669.7 1414,667.8 1415,667.8 1415,668.1 1416,668.1 1416,669.3 1417,669.3 1417,668.7 1418,668.7 1418,668.6 1419,668.6 1419,670.0 1420,670.0 1420,668.2 1421,668.2 1421,670.6 1422,670.6 1422,666.3 1423,666.3 1423,672.2 1424,672.2 1424,672.1 1425,672.1 1425,669.9 1426,669.9 1426,667.2 1427,667.2 1427,668.6 1428,668.6 1428,668.3 1429,668.3 1429,669.4 1430,669.4 1430,669.0 1431,669.0 1431,668.4 1432,668.4 1432,665.5 1433,665.5 1433,667.8 1434,667.8 1434,668.8 1435,668.8 1435,667.1 1436,667.1 1436,668.9 1437,668.9 1437,665.8 1438,665.8 1438,661.5 1439,661.5 1439,666.9 1440,666.9 1440,667.9 1441,667.9 1441,666.9 1442,666.9 1442,669.5 1443,669.5 1443,670.2 1444,670.2 1444,667.7 1445,667.7 1445,672.5 1446,672.5 1446,662.3 1447,662.3 1447,671.1 1448,671.1 1448,667.7 1449,667.7 1449,667.6 1450,667.6 1450,670.4 1451,670.4 1451,668.7 1452,668.7 1452,662.6 1453,662.6 1453,667.2 1454,667.2 1454,669.3 1455,669.3 1455,668.6 1456,668.6 1456,668.5 1457,668.5 1457,671.0 1458,671.0 1458,669.7 1459,669.7 1459,669.3 1460,669.3 1460,656.8 1461,656.8 1461,664.8 1462,664.8 1462,667.2 1463,667.2 1463,670.3 1464,670.3 1464,666.0 1465,666.0 1465,667.8 1466,667.8 1466,668.8 1467,668.8 1467,671.4 1468,671.4 1468,667.0 1469,667.0 1469,671.0 1470,671.0 1470,667.8 1471,667.8 1471,669.6 1472,669.6 1472,668.9 1473,668.9 1473,667.6 1474,667.6 1474,669.4 1475,669.4 1475,662.1 1476,662.1 1476,662.0 1477,662.0 1477,670.3 1478,670.3 1478,666.2 1479,666.2 1479,665.1 1480,665.1 1480,667.4 1481,667.4 1481,668.4 1482,668.4 1482,672.5 1483,672.5 1483,670.8 1484,670.8 1484,665.1 1485,665.1 1485,670.0 1486,670.0 1486,667.5 1487,667.5 1487,669.9 1488,669.9 1488,673.2 1489,673.2 1489,665.4 1490,665.4 1490,670.3 1491,670.3 1491,666.1 1492,666.1 1492,665.2 1493,665.2 1493,668.3 1494,668.3 1494,668.3 1495,668.3 1495,671.0 1496,671.0 1496,672.6 1497,672.6 1497,668.1 1498,668.1 1498,667.8 1499,667.8 1499,666.4 1500,666.4 1500,661.9 1501,661.9 1501,666.9 1502,666.9 1502,668.9 1503,668.9 1503,670.4 1504,670.4 1504,671.7 1505,671.7 1505,669.8 1506,669.8 1506,666.5 1507,666.5 1507,667.8 1508,667.8 1508,668.0 1509,668.0 1509,669.9 1510,669.9 1510,656.2 1511,656.2 1511,669.3 1512,669.3 1512,669.4 1513,669.4 1513,666.1 1514,666.1 1514,671.9 1515,671.9 1515,668.9 1516,668.9 1516,666.1 1517,666.1 1517,669.0 1518,669.0 1518,665.5 1519,665.5 1519,671.6 1520,671.6 1520,669.2 1521,669.2 1521,671.0 1522,671.0 1522,666.6 1523,666.6 1523,664.8 1524,664.8 1524,666.3 1525,666.3 1525,667.5 1526,667.5 1526,670.9 1527,670.9 1527,672.1 1528,672.1 1528,667.9 1529,667.9 1529,668.8 1530,668.8 1530,668.7 1531,668.7 1531,660.3 1532,660.3 1532,669.5 1533,669.5 1533,663.0 1534,663.0 1534,668.1 1535,668.1 1535,668.0 1536,668.0 1536,671.1 1537,671.1 1537,670.9 1538,670.9 1538,666.1 1539,666.1 1539,664.8 1540,664.8 1540,663.0 1541,663.0 1541,673.3 1542,673.3 1542,668.5 1543,668.5 1543,668.0 1544,668.0 1544,670.4 1545,670.4 1545,666.8 1546,666.8 1546,669.8 1547,669.8 1547,671.7 1548,671.7 1548,661.8 1549,661.8 1549,666.5 1550,666.5 1550,668.0 1551,668.0 1551,667.6 1552,667.6 1552,667.4 1553,667.4 1553,672.4 1554,672.4 1554,671.0 1555,671.0 1555,667.4 1556,667.4 1556,673.6 1557,673.6 1557,668.8 1558,668.8 1558,672.2 1559,672.2 1559,668.3 1560,668.3 1560,669.8 1561,669.8 1561,671.0 1562,671.0 1562,670.4 1563,670.4 1563,667.1 1564,667.1 1564,667.7 1565,667.7 1565,671.0 1566,671.0 1566,671.5 1567,671.5 1567,668.8 1568,668.8 1568,670.3 1569,670.3 1569,668.2 1570,668.2 1570,666.9 1571,666.9 1571,665.5 1572,665.5 1572,669.7 1573,669.7 1573,668.4 1574,668.4 1574,668.7 1575,668.7 1575,674.6 1576,674.6 1576,670.0 1577,670.0 1577,667.3 1578,667.3 1578,664.4 1579,664.4 1579,672.4 1580,672.4 1580,658.9 1581,658.9 1581,667.8 1582,667.8 1582,669.6 1583,669.6 1583,670.1 1584,670.1 1584,668.3 1585,668.3 1585,671.9 1586,671.9 1586,669.4 1587,669.4 1587,668.6 1588,668.6 1588,669.0 1589,669.0 1589,667.0 1590,667.0 1590,665.3 1591,665.3 1591,669.4 1592,669.4 1592,664.3 1593,664.3 1593,669.5 1594,669.5 1594,666.8 1595,666.8 1595,667.7 1596,667.7 1596,665.5 1597,665.5 1597,670.8 1598,670.8 1598,661.2 1599,661.2 1599,668.4 1600,668.4 1600,659.4 1601,659.4 1601,668.1 1602,668.1 1602,664.4 1603,664.4 1603,668.2 1604,668.2 1604,669.0 1605,669.0 1605,669.2 1606,669.2 1606,671.6 1607,671.6 1607,669.5 1608,669.5 1608,668.2 1609,668.2 1609,667.2 1610,667.2 1610,670.9 1611,670.9 1611,672.1 1612,672.1 1612,667.8 1613,667.8 1613,667.5 1614,667.5 1614,670.0 1615,670.0 1615,667.5 1616,667.5 1616,665.2 1617,665.2 1617,670.2 1618,670.2 1618,659.2 1619,659.2 1619,667.9 1620,667.9 1620,667.8 1621,667.8 1621,670.1 1622,670.1 1622,673.4 1623,673.4 1623,669.5 1624,669.5 1624,667.0 1625,667.0 1625,667.6 1626,667.6 1626,668.7 1627,668.7 1627,670.3 1628,670.3 1628,671.8 1629,671.8 1629,670.5 1630,670.5 1630,664.4 1631,664.4 1631,669.5 1632,669.5 1632,670.4 1633,670.4 1633,661.9 1634,661.9 1634,669.8 1635,669.8 1635,668.6 1636,668.6 1636,668.3 1637,668.3 1637,668.1 1638,668.1 1638,665.4 1639,665.4 1639,665.0 1640,665.0 1640,671.1 1641,671.1 1641,671.5 1642,671.5 1642,663.8 1643,663.8 1643,671.9 1644,671.9 1644,668.4 1645,668.4 1645,673.2 1646,673.2 1646,672.2 1647,672.2 1647,655.1 1648,655.1 1648,666.1 1649,666.1 1649,666.8 1650,666.8 1650,668.9 1651,668.9 1651,667.4 1652,667.4 1652,671.9 1653,671.9 1653,666.1 1654,666.1 1654,667.2 1655,667.2 1655,666.7 1656,666.7 1656,668.0 1657,668.0 1657,663.7 1658,663.7 1658,669.9 1659,669.9 1659,666.4 1660,666.4 1660,667.3 1661,667.3 1661,663.5 1662,663.5 1662,669.1 1663,669.1 1663,667.7 1664,667.7 1664,669.5 1665,669.5 1665,668.6 1666,668.6 1666,667.8 1667,667.8 1667,667.7 1668,667.7 1668,663.8 1669,663.8 1669,669.7 1670,669.7 1670,668.5 1671,668.5 1671,669.2 1672,669.2 1672,656.1 1673,656.1 1673,666.1 1674,666.1 1674,669.6 1675,669.6 1675,672.7 1676,672.7 1676,670.7 1677,670.7 1677,667.4 1678,667.4 1678,669.7 1679,669.7 1679,669.6 1680,669.6 1680,661.2 1681,661.2 1681,669.6 1682,669.6 1682,668.4 1683,668.4 1683,669.0 1684,669.0 1684,669.3 1685,669.3 1685,669.7 1686,669.7 1686,668.9 1687,668.9 1687,669.3 1688,669.3 1688,669.0 1689,669.0 1689,665.3 1690,665.3 1690,672.4 1691,672.4 1691,668.4 1692,668.4 1692,673.1 1693,673.1 1693,669.2 1694,669.2 1694,665.7 1695,665.7 1695,663.4 1696,663.4 1696,666.8 1697,666.8 1697,664.1 1698,664.1 1698,670.1 1699,670.1 1699,670.8 1700,670.8 1700,665.8 1701,665.8 1701,655.9 1702,655.9 1702,660.2 1703,660.2 1703,668.7 1704,668.7 1704,669.0 1705,669.0 1705,669.8 1706,669.8 1706,668.5 1707,668.5 1707,668.0 1708,668.0 1708,669.9 1709,669.9 1709,668.7 1710,668.7 1710,665.7 1711,665.7 1711,659.9 1712,659.9 1712,669.3 1713,669.3 1713,668.0 1714,668.0 1714,662.3 1715,662.3 1715,663.8 1716,663.8 1716,667.8 1717,667.8 1717,672.0 1718,672.0 1718,669.2 1719,669.2 1719,671.0 1720,671.0 1720,669.1 1721,669.1 1721,662.1 1722,662.1 1722,671.5 1723,671.5 1723,667.9 1724,667.9 1724,660.8 1725,660.8 1725,666.8 1726,666.8 1726,668.9 1727,668.9 1727,664.4 1728,664.4 1728,666.8 1729,666.8 1729,670.6 1730,670.6 1730,667.1 1731,667.1 1731,661.8 1732,661.8 1732,667.1 1733,667.1 1733,669.0 1734,669.0 1734,668.4 1735,668.4 1735,669.8 1736,669.8 1736,669.7 1737,669.7 1737,670.3 1738,670.3 1738,672.5 1739,672.5 1739,668.9 1740,668.9 1740,664.4 1741,664.4 1741,671.4 1742,671.4 1742,667.8 1743,667.8 1743,667.3 1744,667.3 1744,670.5 1745,670.5 1745,670.9 1746,670.9 1746,666.8 1747,666.8 1747,667.7 1748,667.7 1748,671.1 1749,671.1 1749,663.8 1750,663.8 1750,670.1 1751,670.1 1751,667.9 1752,667.9 1752,666.8 1753,666.8 1753,664.6 1754,664.6 1754,665.7 1755,665.7 1755,672.0 1756,672.0 1756,666.4 1757,666.4 1757,660.6 1758,660.6 1758,670.5 1759,670.5 1759,667.1 1760,667.1 1760,668.6 1761,668.6 1761,667.5 1762,667.5 1762,669.9 1763,669.9 1763,667.0 1764,667.0 1764,660.2 1765,660.2 1765,669.6 1766,669.6 1766,666.2 1767,666.2 1767,672.1 1768,672.1 1768,668.9 1769,668.9 1769,668.2 1770,668.2 1770,669.0 1771,669.0 1771,667.6 1772,667.6 1772,669.1 1773,669.1 1773,668.3 1774,668.3 1774,664.3 1775,664.3 1775,670.3 1776,670.3 1776,671.6 1777,671.6 1777,670.8 1778,670.8 1778,668.1 1779,668.1 1779,666.9 1780,666.9 1780,673.0 1781,673.0 1781,665.2 1782,665.2 1782,672.7 1783,672.7 1783,668.0 1784,668.0 1784,670.3 1785,670.3 1785,668.3 1786,668.3 1786,665.1 1787,665.1 1787,665.4 1788,665.4 1788,668.2 1789,668.2 1789,667.0 1790,667.0 1790,665.4 1791,665.4 1791,672.9 1792,672.9 1792,666.8 1793,666.8 1793,670.0 1794,670.0 1794,670.2 1795,670.2 1795,663.1 1796,663.1 1796,670.5 1797,670.5 1797,667.0 1798,667.0 1798,669.7 1799,669.7 1799,665.1 1800,665.1 1800,668.0 1801,668.0 1801,655.1 1802,655.1 1802,659.7 1803,659.7 1803,669.9 1804,669.9 1804,663.7 1805,663.7 1805,660.4 1806,660.4 1806,666.8 1807,666.8 1807,665.6 1808,665.6 1808,664.3 1809,664.3 1809,673.2 1810,673.2 1810,669.1 1811,669.1 1811,668.0 1812,668.0 1812,667.9 1813,667.9 1813,666.6 1814,666.6 1814,667.9 1815,667.9 1815,671.5 1816,671.5 1816,665.5 1817,665.5 1817,659.2 1818,659.2 1818,670.7 1819,670.7 1819,659.3 1820,659.3 1820,668.9 1821,668.9 1821,663.6 1822,663.6 1822,668.8 1823,668.8 1823,720.2 1822,720.2 1822,725.3 1821,725.3 1821,716.4 1820,716.4 1820,714.5 1819,714.5 1819,725.5 1818,725.5 1818,719.7 1817,719.7 1817,709.8 1816,709.8 1816,718.2 1815,718.2 1815,715.9 1814,715.9 1814,723.8 1813,723.8 1813,720.9 1812,720.9 1812,720.6 1811,720.6 1811,724.2 1810,724.2 1810,716.6 1809,716.6 1809,722.1 1808,722.1 1808,722.6 1807,722.6 1807,716.0 1806,716.0 1806,719.7 1805,719.7 1805,717.4 1804,717.4 1804,714.8 1803,714.8 1803,717.3 1802,717.3 1802,715.8 1801,715.8 1801,714.5 1800,714.5 1800,717.4 1799,717.4 1799,713.3 1798,713.3 1798,718.7 1797,718.7 1797,719.5 1796,719.5 1796,721.3 1795,721.3 1795,716.5 1794,716.5 1794,717.8 1793,717.8 1793,725.8 1792,725.8 1792,718.1 1791,718.1 1791,715.0 1790,715.0 1790,716.2 1789,716.2 1789,714.6 1788,714.6 1788,716.7 1787,716.7 1787,718.1 1786,718.1 1786,723.6 1785,723.6 1785,720.4 1784,720.4 1784,716.7 1783,716.7 1783,719.9 1782,719.9 1782,720.8 1781,720.8 1781,715.0 1780,715.0 1780,721.5 1779,721.5 1779,717.7 1778,717.7 1778,724.2 1777,724.2 1777,719.4 1776,719.4 1776,718.5 1775,718.5 1775,717.3 1774,717.3 1774,720.6 1773,720.6 1773,720.0 1772,720.0 1772,721.1 1771,721.1 1771,718.5 1770,718.5 1770,718.3 1769,718.3 1769,725.3 1768,725.3 1768,716.5 1767,716.5 1767,715.7 1766,715.7 1766,716.0 1765,716.0 1765,714.7 1764,714.7 1764,715.6 1763,715.6 1763,718.7 1762,718.7 1762,715.4 1761,715.4 1761,719.3 1760,719.3 1760,716.3 1759,716.3 1759,717.8 1758,717.8 1758,714.2 1757,714.2 1757,723.1 1756,723.1 1756,720.9 1755,720.9 1755,716.4 1754,716.4 1754,719.5 1753,719.5 1753,717.4 1752,717.4 1752,719.2 1751,719.2 1751,720.7 1750,720.7 1750,721.3 1749,721.3 1749,715.2 1748,715.2 1748,716.4 1747,716.4 1747,718.4 1746,718.4 1746,722.2 1745,722.2 1745,720.6 1744,720.6 1744,716.0 1743,716.0 1743,715.2 1742,715.2 1742,719.0 1741,719.0 1741,717.9 1740,717.9 1740,716.1 1739,716.1 1739,720.1 1738,720.1 1738,719.4 1737,719.4 1737,714.3 1736,714.3 1736,715.4 1735,715.4 1735,729.0 1734,729.0 1734,717.4 1733,717.4 1733,718.7 1732,718.7 1732,721.8 1731,721.8 1731,716.1 1730,716.1 1730,718.9 1729,718.9 1729,715.5 1728,715.5 1728,714.9 1727,714.9 1727,713.4 1726,713.4 1726,718.6 1725,718.6 1725,714.6 1724,714.6 1724,720.8 1723,720.8 1723,714.3 1722,714.3 1722,718.8 1721,718.8 1721,717.4 1720,717.4 1720,715.1 1719,715.1 1719,719.8 1718,719.8 1718,720.8 1717,720.8 1717,717.1 1716,717.1 1716,713.6 1715,713.6 1715,726.7 1714,726.7 1714,716.3 1713,716.3 1713,718.4 1712,718.4 1712,717.7 1711,717.7 1711,723.9 1710,723.9 1710,716.7 1709,716.7 1709,716.7 1708,716.7 1708,714.6 1707,714.6 1707,725.9 1706,725.9 1706,714.3 1705,714.3 1705,716.3 1704,716.3 1704,714.8 1703,714.8 1703,722.1 1702,722.1 1702,715.3 1701,715.3 1701,722.4 1700,722.4 1700,716.1 1699,716.1 1699,718.3 1698,718.3 1698,721.0 1697,721.0 1697,717.5 1696,717.5 1696,720.2 1695,720.2 1695,717.0 1694,717.0 1694,720.1 1693,720.1 1693,728.2 1692,728.2 1692,718.2 1691,718.2 1691,714.8 1690,714.8 1690,716.3 1689,716.3 1689,720.3 1688,720.3 1688,722.5 1687,722.5 1687,717.4 1686,717.4 1686,728.4 1685,728.4 1685,715.0 1684,715.0 1684,713.1 1683,713.1 1683,722.1 1682,722.1 1682,717.9 1681,717.9 1681,722.0 1680,722.0 1680,724.5 1679,724.5 1679,720.0 1678,720.0 1678,715.0 1677,715.0 1677,717.0 1676,717.0 1676,718.0 1675,718.0 1675,713.9 1674,713.9 1674,719.8 1673,719.8 1673,728.9 1672,728.9 1672,713.7 1671,713.7 1671,715.0 1670,715.0 1670,713.1 1669,713.1 1669,721.8 1668,721.8 1668,719.6 1667,719.6 1667,724.8 1666,724.8 1666,714.7 1665,714.7 1665,718.5 1664,718.5 1664,715.6 1663,715.6 1663,725.9 1662,725.9 1662,715.1 1661,715.1 1661,713.7 1660,713.7 1660,721.6 1659,721.6 1659,711.9 1658,711.9 1658,716.3 1657,716.3 1657,719.7 1656,719.7 1656,715.3 1655,715.3 1655,727.8 1654,727.8 1654,716.6 1653,716.6 1653,719.3 1652,719.3 1652,718.8 1651,718.8 1651,715.9 1650,715.9 1650,717.5 1649,717.5 1649,720.3 1648,720.3 1648,721.0 1647,721.0 1647,721.3 1646,721.3 1646,713.8 1645,713.8 1645,719.6 1644,719.6 1644,715.3 1643,715.3 1643,715.5 1642,715.5 1642,716.8 1641,716.8 1641,724.8 1640,724.8 1640,715.0 1639,715.0 1639,720.9 1638,720.9 1638,721.9 1637,721.9 1637,721.0 1636,721.0 1636,715.8 1635,715.8 1635,713.2 1634,713.2 1634,718.5 1633,718.5 1633,717.9 1632,717.9 1632,725.5 1631,725.5 1631,715.6 1630,715.6 1630,718.2 1629,718.2 1629,720.0 1628,720.0 1628,715.8 1627,715.8 1627,727.9 1626,727.9 1626,713.5 1625,713.5 1625,721.2 1624,721.2 1624,713.5 1623,713.5 1623,725.4 1622,725.4 1622,722.8 1621,722.8 1621,716.9 1620,716.9 1620,729.3 1619,729.3 1619,719.2 1618,719.2 1618,716.4 1617,716.4 1617,711.2 1616,711.2 1616,725.4 1615,725.4 1615,710.9 1614,710.9 1614,715.6 1613,715.6 1613,718.2 1612,718.2 1612,717.7 1611,717.7 1611,725.7 1610,725.7 1610,714.7 1609,714.7 1609,710.5 1608,710.5 1608,717.0 1607,717.0 1607,715.6 1606,715.6 1606,713.5 1605,713.5 1605,720.3 1604,720.3 1604,722.5 1603,722.5 1603,716.6 1602,716.6 1602,716.3 1601,716.3 1601,717.1 1600,717.1 1600,716.4 1599,716.4 1599,715.3 1598,715.3 1598,713.7 1597,713.7 1597,717.3 1596,717.3 1596,720.1 1595,720.1 1595,717.1 1594,717.1 1594,713.7 1593,713.7 1593,720.3 1592,720.3 1592,724.2 1591,724.2 1591,728.3 1590,728.3 1590,717.1 1589,717.1 1589,724.7 1588,724.7 1588,718.1 1587,718.1 1587,714.3 1586,714.3 1586,715.5 1585,715.5 1585,717.8 1584,717.8 1584,714.0 1583,714.0 1583,713.5 1582,713.5 1582,718.0 1581,718.0 1581,715.6 1580,715.6 1580,717.5 1579,717.5 1579,731.4 1578,731.4 1578,717.0 1577,717.0 1577,717.2 1576,717.2 1576,717.0 1575,717.0 1575,717.3 1574,717.3 1574,724.9 1573,724.9 1573,721.8 1572,721.8 1572,719.2 1571,719.2 1571,713.9 1570,713.9 1570,719.2 1569,719.2 1569,715.6 1568,715.6 1568,713.0 1567,713.0 1567,716.9 1566,716.9 1566,722.6 1565,722.6 1565,714.9 1564,714.9 1564,718.1 1563,718.1 1563,717.4 1562,717.4 1562,718.7 1561,718.7 1561,727.2 1560,727.2 1560,719.4 1559,719.4 1559,716.9 1558,716.9 1558,721.6 1557,721.6 1557,716.4 1556,716.4 1556,718.8 1555,718.8 1555,719.0 1554,719.0 1554,719.3 1553,719.3 1553,715.9 1552,715.9 1552,717.0 1551,717.0 1551,713.9 1550,713.9 1550,722.3 1549,722.3 1549,731.4 1548,731.4 1548,720.5 1547,720.5 1547,717.5 1546,717.5 1546,719.0 1545,719.0 1545,724.0 1544,724.0 1544,729.6 1543,729.6 1543,717.3 1542,717.3 1542,715.0 1541,715.0 1541,715.0 1540,715.0 1540,718.6 1539,718.6 1539,722.9 1538,722.9 1538,716.6 1537,716.6 1537,716.5 1536,716.5 1536,717.7 1535,717.7 1535,718.2 1534,718.2 1534,727.8 1533,727.8 1533,714.9 1532,714.9 1532,715.7 1531,715.7 1531,716.6 1530,716.6 1530,715.3 1529,715.3 1529,717.2 1528,717.2 1528,717.3 1527,717.3 1527,718.2 1526,718.2 1526,716.2 1525,716.2 1525,719.0 1524,719.0 1524,714.5 1523,714.5 1523,716.8 1522,716.8 1522,725.6 1521,725.6 1521,717.7 1520,717.7 1520,719.4 1519,719.4 1519,718.4 1518,718.4 1518,719.1 1517,719.1 1517,724.0 1516,724.0 1516,715.9 1515,715.9 1515,725.3 1514,725.3 1514,715.4 1513,715.4 1513,714.9 1512,714.9 1512,713.8 1511,713.8 1511,720.2 1510,720.2 1510,719.6 1509,719.6 1509,717.9 1508,717.9 1508,716.9 1507,716.9 1507,717.4 1506,717.4 1506,713.3 1505,713.3 1505,720.1 1504,720.1 1504,714.2 1503,714.2 1503,717.1 1502,717.1 1502,717.3 1501,717.3 1501,720.6 1500,720.6 1500,725.6 1499,725.6 1499,724.3 1498,724.3 1498,718.3 1497,718.3 1497,717.7 1496,717.7 1496,716.3 1495,716.3 1495,714.6 1494,714.6 1494,721.1 1493,721.1 1493,727.7 1492,727.7 1492,723.8 1491,723.8 1491,722.7 1490,722.7 1490,718.6 1489,718.6 1489,714.4 1488,714.4 1488,718.0 1487,718.0 1487,717.4 1486,717.4 1486,715.7 1485,715.7 1485,718.7 1484,718.7 1484,730.4 1483,730.4 1483,716.3 1482,716.3 1482,725.6 1481,725.6 1481,719.1 1480,719.1 1480,718.7 1479,718.7 1479,714.1 1478,714.1 1478,718.6 1477,718.6 1477,719.9 1476,719.9 1476,727.2 1475,727.2 1475,718.5 1474,718.5 1474,713.6 1473,713.6 1473,716.4 1472,716.4 1472,714.3 1471,714.3 1471,714.7 1470,714.7 1470,724.0 1469,724.0 1469,721.3 1468,721.3 1468,719.4 1467,719.4 1467,718.0 1466,718.0 1466,718.8 1465,718.8 1465,720.6 1464,720.6 1464,716.8 1463,716.8 1463,716.9 1462,716.9 1462,717.0 1461,717.0 1461,719.9 1460,719.9 1460,715.9 1459,715.9 1459,712.3 1458,712.3 1458,717.8 1457,717.8 1457,721.3 1456,721.3 1456,717.5 1455,717.5 1455,721.9 1454,721.9 1454,728.1 1453,728.1 1453,715.2 1452,715.2 1452,717.6 1451,717.6 1451,716.0 1450,716.0 1450,715.7 1449,715.7 1449,721.6 1448,721.6 1448,717.2 1447,717.2 1447,715.9 1446,715.9 1446,720.7 1445,720.7 1445,717.7 1444,717.7 1444,715.2 1443,715.2 1443,718.3 1442,718.3 1442,718.0 1441,718.0 1441,711.8 1440,711.8 1440,717.2 1439,717.2 1439,719.2 1438,719.2 1438,716.4 1437,716.4 1437,727.6 1436,727.6 1436,713.9 1435,713.9 1435,715.3 1434,715.3 1434,718.7 1433,718.7 1433,717.4 1432,717.4 1432,719.5 1431,719.5 1431,722.7 1430,722.7 1430,713.1 1429,713.1 1429,715.6 1428,715.6 1428,719.9 1427,719.9 1427,719.1 1426,719.1 1426,719.9 1425,719.9 1425,716.3 1424,716.3 1424,714.6 1423,714.6 1423,721.1 1422,721.1 1422,721.9 1421,721.9 1421,715.9 1420,715.9 1420,717.0 1419,717.0 1419,715.0 1418,715.0 1418,714.7 1417,714.7 1417,722.9 1416,722.9 1416,721.9 1415,721.9 1415,725.0 1414,725.0 1414,715.1 1413,715.1 1413,717.1 1412,717.1 1412,721.5 1411,721.5 1411,722.7 1410,722.7 1410,718.7 1409,718.7 1409,718.0 1408,718.0 1408,720.6 1407,720.6 1407,714.1 1406,714.1 1406,726.3 1405,726.3 1405,727.7 1404,727.7 1404,718.2 1403,718.2 1403,718.4 1402,718.4 1402,718.0 1401,718.0 1401,725.4 1400,725.4 1400,717.9 1399,717.9 1399,715.2 1398,715.2 1398,718.6 1397,718.6 1397,715.1 1396,715.1 1396,717.1 1395,717.1 1395,715.6 1394,715.6 1394,726.2 1393,726.2 1393,725.3 1392,725.3 1392,714.5 1391,714.5 1391,711.7 1390,711.7 1390,725.2 1389,725.2 1389,716.1 1388,716.1 1388,716.8 1387,716.8 1387,720.5 1386,720.5 1386,723.3 1385,723.3 1385,720.0 1384,720.0 1384,716.9 1383,716.9 1383,711.8 1382,711.8 1382,719.9 1381,719.9 1381,723.7 1380,723.7 1380,719.6 1379,719.6 1379,714.7 1378,714.7 1378,715.8 1377,715.8 1377,718.4 1376,718.4 1376,723.5 1375,723.5 1375,715.2 1374,715.2 1374,716.2 1373,716.2 1373,719.4 1372,719.4 1372,717.9 1371,717.9 1371,715.7 1370,715.7 1370,715.2 1369,715.2 1369,720.2 1368,720.2 1368,714.7 1367,714.7 1367,715.1 1366,715.1 1366,715.2 1365,715.2 1365,717.0 1364,717.0 1364,722.5 1363,722.5 1363,713.0 1362,713.0 1362,716.6 1361,716.6 1361,730.6 1360,730.6 1360,715.7 1359,715.7 1359,720.0 1358,720.0 1358,728.8 1357,728.8 1357,713.1 1356,713.1 1356,713.9 1355,713.9 1355,715.3 1354,715.3 1354,718.7 1353,718.7 1353,715.1 1352,715.1 1352,718.2 1351,718.2 1351,724.1 1350,724.1 1350,720.4 1349,720.4 1349,722.6 1348,722.6 1348,716.1 1347,716.1 1347,715.0 1346,715.0 1346,712.7 1345,712.7 1345,719.2 1344,719.2 1344,715.4 1343,715.4 1343,714.2 1342,714.2 1342,717.0 1341,717.0 1341,716.8 1340,716.8 1340,715.4 1339,715.4 1339,719.1 1338,719.1 1338,715.7 1337,715.7 1337,716.4 1336,716.4 1336,725.6 1335,725.6 1335,720.0 1334,720.0 1334,718.0 1333,718.0 1333,711.2 1332,711.2 1332,716.1 1331,716.1 1331,724.9 1330,724.9 1330,719.8 1329,719.8 1329,720.9 1328,720.9 1328,715.2 1327,715.2 1327,713.0 1326,713.0 1326,723.5 1325,723.5 1325,720.0 1324,720.0 1324,715.4 1323,715.4 1323,719.4 1322,719.4 1322,719.1 1321,719.1 1321,715.9 1320,715.9 1320,717.1 1319,717.1 1319,714.3 1318,714.3 1318,719.7 1317,719.7 1317,713.8 1316,713.8 1316,716.6 1315,716.6 1315,720.0 1314,720.0 1314,712.9 1313,712.9 1313,717.2 1312,717.2 1312,714.7 1311,714.7 1311,718.3 1310,718.3 1310,718.2 1309,718.2 1309,724.7 1308,724.7 1308,719.6 1307,719.6 1307,717.8 1306,717.8 1306,723.4 1305,723.4 1305,724.8 1304,724.8 1304,719.2 1303,719.2 1303,717.5 1302,717.5 1302,716.6 1301,716.6 1301,713.2 1300,713.2 1300,720.2 1299,720.2 1299,720.0 1298,720.0 1298,720.4 1297,720.4 1297,721.5 1296,721.5 1296,718.6 1295,718.6 1295,716.5 1294,716.5 1294,713.4 1293,713.4 1293,716.2 1292,716.2 1292,715.7 1291,715.7 1291,715.3 1290,715.3 1290,715.8 1289,715.8 1289,715.4 1288,715.4 1288,716.3 1287,716.3 1287,716.9 1286,716.9 1286,712.5 1285,712.5 1285,713.0 1284,713.0 1284,725.3 1283,725.3 1283,722.9 1282,722.9 1282,719.3 1281,719.3 1281,717.3 1280,717.3 1280,719.1 1279,719.1 1279,714.9 1278,714.9 1278,713.1 1277,713.1 1277,719.6 1276,719.6 1276,723.6 1275,723.6 1275,718.3 1274,718.3 1274,715.7 1273,715.7 1273,717.6 1272,717.6 1272,716.4 1271,716.4 1271,721.5 1270,721.5 1270,721.0 1269,721.0 1269,719.3 1268,719.3 1268,720.7 1267,720.7 1267,716.8 1266,716.8 1266,715.1 1265,715.1 1265,715.6 1264,715.6 1264,723.2 1263,723.2 1263,713.2 1262,713.2 1262,713.7 1261,713.7 1261,720.9 1260,720.9 1260,726.6 1259,726.6 1259,716.9 1258,716.9 1258,718.6 1257,718.6 1257,726.9 1256,726.9 1256,719.7 1255,719.7 1255,715.4 1254,715.4 1254,718.3 1253,718.3 1253,718.1 1252,718.1 1252,718.3 1251,718.3 1251,717.6 1250,717.6 1250,721.4 1249,721.4 1249,727.2 1248,727.2 1248,715.6 1247,715.6 1247,724.9 1246,724.9 1246,718.7 1245,718.7 1245,718.9 1244,718.9 1244,717.6 1243,717.6 1243,720.7 1242,720.7 1242,715.8 1241,715.8 1241,716.7 1240,716.7 1240,721.6 1239,721.6 1239,726.9 1238,726.9 1238,726.3 1237,726.3 1237,713.5 1236,713.5 1236,715.3 1235,715.3 1235,713.4 1234,713.4 1234,719.0 1233,719.0 1233,726.5 1232,726.5 1232,719.2 1231,719.2 1231,716.5 1230,716.5 1230,720.5 1229,720.5 1229,718.9 1228,718.9 1228,715.2 1227,715.2 1227,716.7 1226,716.7 1226,719.4 1225,719.4 1225,715.2 1224,715.2 1224,717.4 1223,717.4 1223,719.4 1222,719.4 1222,716.7 1221,716.7 1221,709.8 1220,709.8 1220,720.4 1219,720.4 1219,719.2 1218,719.2 1218,716.0 1217,716.0 1217,718.8 1216,718.8 1216,710.7 1215,710.7 1215,712.3 1214,712.3 1214,717.4 1213,717.4 1213,726.4 1212,726.4 1212,718.6 1211,718.6 1211,717.3 1210,717.3 1210,718.3 1209,718.3 1209,714.6 1208,714.6 1208,720.5 1207,720.5 1207,719.6 1206,719.6 1206,715.7 1205,715.7 1205,717.2 1204,717.2 1204,715.0 1203,715.0 1203,727.5 1202,727.5 1202,720.5 1201,720.5 1201,717.9 1200,717.9 1200,714.7 1199,714.7 1199,714.5 1198,714.5 1198,718.5 1197,718.5 1197,719.0 1196,719.0 1196,720.6 1195,720.6 1195,712.2 1194,712.2 1194,717.8 1193,717.8 1193,723.5 1192,723.5 1192,718.1 1191,718.1 1191,725.2 1190,725.2 1190,717.0 1189,717.0 1189,725.3 1188,725.3 1188,716.5 1187,716.5 1187,726.4 1186,726.4 1186,716.8 1185,716.8 1185,717.4 1184,717.4 1184,716.6 1183,716.6 1183,713.7 1182,713.7 1182,722.2 1181,722.2 1181,718.6 1180,718.6 1180,712.1 1179,712.1 1179,715.9 1178,715.9 1178,716.6 1177,716.6 1177,714.5 1176,714.5 1176,725.0 1175,725.0 1175,718.5 1174,718.5 1174,721.9 1173,721.9 1173,726.2 1172,726.2 1172,720.8 1171,720.8 1171,715.1 1170,715.1 1170,715.8 1169,715.8 1169,717.5 1168,717.5 1168,720.5 1167,720.5 1167,721.7 1166,721.7 1166,722.5 1165,722.5 1165,718.6 1164,718.6 1164,719.4 1163,719.4 1163,719.3 1162,719.3 1162,720.0 1161,720.0 1161,727.6 1160,727.6 1160,716.7 1159,716.7 1159,718.8 1158,718.8 1158,724.7 1157,724.7 1157,713.4 1156,713.4 1156,721.0 1155,721.0 1155,724.0 1154,724.0 1154,715.4 1153,715.4 1153,717.3 1152,717.3 1152,721.2 1151,721.2 1151,714.2 1150,714.2 1150,723.4 1149,723.4 1149,717.6 1148,717.6 1148,713.1 1147,713.1 1147,716.9 1146,716.9 1146,716.8 1145,716.8 1145,710.9 1144,710.9 1144,715.6 1143,715.6 1143,716.7 1142,716.7 1142,720.2 1141,720.2 1141,722.9 1140,722.9 1140,715.9 1139,715.9 1139,717.3 1138,717.3 1138,716.8 1137,716.8 1137,712.2 1136,712.2 1136,718.0 1135,718.0 1135,715.2 1134,715.2 1134,715.9 1133,715.9 1133,717.7 1132,717.7 1132,711.7 1131,711.7 1131,714.7 1130,714.7 1130,715.2 1129,715.2 1129,716.7 1128,716.7 1128,715.6 1127,715.6 1127,716.1 1126,716.1 1126,717.9 1125,717.9 1125,717.5 1124,717.5 1124,714.4 1123,714.4 1123,726.0 1122,726.0 1122,716.0 1121,716.0 1121,714.3 1120,714.3 1120,716.9 1119,716.9 1119,719.6 1118,719.6 1118,729.7 1117,729.7 1117,716.1 1116,716.1 1116,720.7 1115,720.7 1115,716.3 1114,716.3 1114,713.9 1113,713.9 1113,719.5 1112,719.5 1112,716.5 1111,716.5 1111,723.3 1110,723.3 1110,719.2 1109,719.2 1109,723.6 1108,723.6 1108,717.9 1107,717.9 1107,720.0 1106,720.0 1106,717.3 1105,717.3 1105,718.0 1104,718.0 1104,714.3 1103,714.3 1103,729.0 1102,729.0 1102,723.1 1101,723.1 1101,714.6 1100,714.6 1100,718.8 1099,718.8 1099,717.9 1098,717.9 1098,714.7 1097,714.7 1097,720.6 1096,720.6 1096,718.1 1095,718.1 1095,716.9 1094,716.9 1094,723.0 1093,723.0 1093,717.7 1092,717.7 1092,715.2 1091,715.2 1091,715.6 1090,715.6 1090,722.5 1089,722.5 1089,718.6 1088,718.6 1088,717.6 1087,717.6 1087,719.0 1086,719.0 1086,722.8 1085,722.8 1085,722.0 1084,722.0 1084,715.7 1083,715.7 1083,717.4 1082,717.4 1082,720.6 1081,720.6 1081,721.4 1080,721.4 1080,715.3 1079,715.3 1079,720.0 1078,720.0 1078,723.2 1077,723.2 1077,720.0 1076,720.0 1076,719.1 1075,719.1 1075,715.2 1074,715.2 1074,720.9 1073,720.9 1073,721.7 1072,721.7 1072,717.0 1071,717.0 1071,715.8 1070,715.8 1070,716.1 1069,716.1 1069,714.0 1068,714.0 1068,718.7 1067,718.7 1067,716.4 1066,716.4 1066,714.8 1065,714.8 1065,715.5 1064,715.5 1064,714.1 1063,714.1 1063,718.4 1062,718.4 1062,713.2 1061,713.2 1061,723.1 1060,723.1 1060,718.2 1059,718.2 1059,720.4 1058,720.4 1058,719.3 1057,719.3 1057,717.6 1056,717.6 1056,722.0 1055,722.0 1055,722.2 1054,722.2 1054,718.5 1053,718.5 1053,723.9 1052,723.9 1052,716.6 1051,716.6 1051,717.7 1050,717.7 1050,721.1 1049,721.1 1049,719.7 1048,719.7 1048,720.3 1047,720.3 1047,713.5 1046,713.5 1046,716.3 1045,716.3 1045,715.4 1044,715.4 1044,716.6 1043,716.6 1043,728.8 1042,728.8 1042,719.7 1041,719.7 1041,714.1 1040,714.1 1040,725.9 1039,725.9 1039,719.1 1038,719.1 1038,716.4 1037,716.4 1037,714.7 1036,714.7 1036,714.7 1035,714.7 1035,722.1 1034,722.1 1034,717.0 1033,717.0 1033,723.6 1032,723.6 1032,718.8 1031,718.8 1031,722.2 1030,722.2 1030,718.8 1029,718.8 1029,721.9 1028,721.9 1028,718.0 1027,718.0 1027,720.8 1026,720.8 1026,715.3 1025,715.3 1025,717.1 1024,717.1 1024,720.8 1023,720.8 1023,718.9 1022,718.9 1022,711.6 1021,711.6 1021,714.6 1020,714.6 1020,719.9 1019,719.9 1019,715.5 1018,715.5 1018,721.4 1017,721.4 1017,723.1 1016,723.1 1016,718.8 1015,718.8 1015,712.3 1014,712.3 1014,720.5 1013,720.5 1013,722.5 1012,722.5 1012,713.4 1011,713.4 1011,713.4 1010,713.4 1010,717.4 1009,717.4 1009,723.0 1008,723.0 1008,718.9 1007,718.9 1007,718.0 1006,718.0 1006,717.4 1005,717.4 1005,720.8 1004,720.8 1004,717.9 1003,717.9 1003,717.7 1002,717.7 1002,720.3 1001,720.3 1001,723.8 1000,723.8 1000,721.3 999,721.3 999,713.9 998,713.9 998,716.7 997,716.7 997,718.3 996,718.3 996,718.2 995,718.2 995,718.9 994,718.9 994,716.1 993,716.1 993,716.4 992,716.4 992,715.7 991,715.7 991,719.4 990,719.4 990,723.0 989,723.0 989,718.4 988,718.4 988,715.4 987,715.4 987,717.7 986,717.7 986,716.5 985,716.5 985,722.7 984,722.7 984,716.7 983,716.7 983,718.6 982,718.6 982,720.4 981,720.4 981,716.9 980,716.9 980,728.1 979,728.1 979,716.7 978,716.7 978,717.5 977,717.5 977,720.7 976,720.7 976,721.5 975,721.5 975,720.3 974,720.3 974,716.3 973,716.3 973,725.8 972,725.8 972,711.0 971,711.0 971,725.1 970,725.1 970,715.1 969,715.1 969,715.3 968,715.3 968,718.5 967,718.5 967,727.0 966,727.0 966,718.6 965,718.6 965,720.8 964,720.8 964,716.1 963,716.1 963,717.7 962,717.7 962,715.4 961,715.4 961,717.6 960,717.6 960,717.8 959,717.8 959,713.7 958,713.7 958,721.1 957,721.1 957,719.2 956,719.2 956,717.0 955,717.0 955,722.3 954,722.3 954,718.3 953,718.3 953,718.3 952,718.3 952,717.6 951,717.6 951,724.5 950,724.5 950,718.0 949,718.0 949,713.7 948,713.7 948,715.3 947,715.3 947,718.1 946,718.1 946,716.4 945,716.4 945,719.1 944,719.1 944,728.0 943,728.0 943,716.3 942,716.3 942,714.8 941,714.8 941,715.0 940,715.0 940,715.4 939,715.4 939,715.7 938,715.7 938,726.1 937,726.1 937,717.6 936,717.6 936,717.3 935,717.3 935,716.8 934,716.8 934,713.0 933,713.0 933,716.9 932,716.9 932,719.9 931,719.9 931,723.5 930,723.5 930,717.7 929,717.7 929,713.4 928,713.4 928,718.5 927,718.5 927,716.5 926,716.5 926,726.1 925,726.1 925,722.4 924,722.4 924,714.7 923,714.7 923,716.4 922,716.4 922,714.6 921,714.6 921,712.6 920,712.6 920,717.0 919,717.0 919,714.5 918,714.5 918,716.6 917,716.6 917,718.2 916,718.2 916,720.4 915,720.4 915,724.0 914,724.0 914,716.6 913,716.6 913,714.5 912,714.5 912,715.8 911,715.8 911,717.3 910,717.3 910,716.9 909,716.9 909,718.3 908,718.3 908,718.4 907,718.4 907,718.5 906,718.5 906,720.4 905,720.4 905,722.1 904,722.1 904,717.5 903,717.5 903,713.3 902,713.3 902,716.6 901,716.6 901,716.0 900,716.0 900,721.5 899,721.5 899,716.9 898,716.9 898,729.4 897,729.4 897,714.5 896,714.5 896,720.2 895,720.2 895,719.2 894,719.2 894,715.6 893,715.6 893,726.0 892,726.0 892,721.0 891,721.0 891,719.0 890,719.0 890,714.1 889,714.1 889,716.3 888,716.3 888,719.5 887,719.5 887,714.4 886,714.4 886,716.7 885,716.7 885,717.5 884,717.5 884,718.3 883,718.3 883,716.5 882,716.5 882,722.4 881,722.4 881,714.7 880,714.7 880,716.5 879,716.5 879,716.6 878,716.6 878,712.7 877,712.7 877,720.6 876,720.6 876,715.3 875,715.3 875,719.5 874,719.5 874,718.0 873,718.0 873,716.9 872,716.9 872,717.1 871,717.1 871,719.5 870,719.5 870,722.3 869,722.3 869,720.7 868,720.7 868,714.5 867,714.5 867,718.1 866,718.1 866,716.2 865,716.2 865,722.1 864,722.1 864,715.3 863,715.3 863,718.9 862,718.9 862,716.3 861,716.3 861,716.8 860,716.8 860,715.4 859,715.4 859,713.9 858,713.9 858,718.4 857,718.4 857,715.0 856,715.0 856,721.9 855,721.9 855,723.7 854,723.7 854,724.9 853,724.9 853,712.9 852,712.9 852,712.8 851,712.8 851,715.2 850,715.2 850,712.0 849,712.0 849,722.8 848,722.8 848,719.9 847,719.9 847,716.9 846,716.9 846,723.3 845,723.3 845,717.7 844,717.7 844,714.9 843,714.9 843,714.5 842,714.5 842,718.8 841,718.8 841,717.4 840,717.4 840,719.4 839,719.4 839,718.2 838,718.2 838,717.9 837,717.9 837,719.9 836,719.9 836,722.8 835,722.8 835,715.3 834,715.3 834,728.3 833,728.3 833,718.2 832,718.2 832,718.8 831,718.8 831,715.9 830,715.9 830,713.5 829,713.5 829,720.7 828,720.7 828,717.3 827,717.3 827,720.3 826,720.3 826,718.0 825,718.0 825,730.9 824,730.9 824,714.6 823,714.6 823,722.5 822,722.5 822,723.0 821,723.0 821,718.7 820,718.7 820,716.6 819,716.6 819,717.7 818,717.7 818,715.7 817,715.7 817,714.5 816,714.5 816,723.5 815,723.5 815,714.3 814,714.3 814,718.4 813,718.4 813,716.0 812,716.0 812,718.6 811,718.6 811,721.4 810,721.4 810,712.2 809,712.2 809,718.1 808,718.1 808,717.9 807,717.9 807,717.1 806,717.1 806,725.4 805,725.4 805,718.8 804,718.8 804,717.1 803,717.1 803,713.5 802,713.5 802,715.4 801,715.4 801,719.2 800,719.2 800,714.8 799,714.8 799,716.3 798,716.3 798,718.5 797,718.5 797,718.4 796,718.4 796,712.8 795,712.8 795,719.9 794,719.9 794,716.5 793,716.5 793,716.0 792,716.0 792,718.2 791,718.2 791,717.4 790,717.4 790,726.2 789,726.2 789,723.1 788,723.1 788,715.7 787,715.7 787,719.5 786,719.5 786,716.1 785,716.1 785,718.9 784,718.9 784,719.1 783,719.1 783,717.9 782,717.9 782,715.1 781,715.1 781,718.1 780,718.1 780,726.6 779,726.6 779,721.8 778,721.8 778,719.7 777,719.7 777,721.9 776,721.9 776,715.9 775,715.9 775,719.8 774,719.8 774,723.0 773,723.0 773,717.0 772,717.0 772,719.7 771,719.7 771,721.3 770,721.3 770,717.5 769,717.5 769,721.4 768,721.4 768,718.1 767,718.1 767,721.8 766,721.8 766,719.1 765,719.1 765,718.5 764,718.5 764,714.7 763,714.7 763,719.8 762,719.8 762,717.0 761,717.0 761,720.3 760,720.3 760,719.3 759,719.3 759,714.6 758,714.6 758,719.1 757,719.1 757,720.4 756,720.4 756,722.3 755,722.3 755,724.9 754,724.9 754,721.4 753,721.4 753,713.1 752,713.1 752,724.2 751,724.2 751,725.7 750,725.7 750,718.6 749,718.6 749,717.5 748,717.5 748,720.1 747,720.1 747,728.3 746,728.3 746,721.8 745,721.8 745,719.5 744,719.5 744,713.2 743,713.2 743,721.9 742,721.9 742,717.7 741,717.7 741,713.9 740,713.9 740,728.5 739,728.5 739,718.7 738,718.7 738,714.8 737,714.8 737,717.0 736,717.0 736,715.8 735,715.8 735,721.0 734,721.0 734,716.4 733,716.4 733,720.7 732,720.7 732,720.1 731,720.1 731,729.2 730,729.2 730,718.5 729,718.5 729,718.7 728,718.7 728,710.1 727,710.1 727,714.3 726,714.3 726,716.1 725,716.1 725,718.3 724,718.3 724,714.7 723,714.7 723,718.4 722,718.4 722,721.9 721,721.9 721,714.7 720,714.7 720,714.9 719,714.9 719,715.8 718,715.8 718,722.9 717,722.9 717,721.3 716,721.3 716,729.0 715,729.0 715,719.7 714,719.7 714,716.2 713,716.2 713,718.0 712,718.0 712,714.5 711,714.5 711,716.2 710,716.2 710,717.1 709,717.1 709,722.3 708,722.3 708,712.9 707,712.9 707,713.7 706,713.7 706,718.9 705,718.9 705,718.1 704,718.1 704,717.9 703,717.9 703,717.8 702,717.8 702,724.2 701,724.2 701,715.6 700,715.6 700,722.3 699,722.3 699,717.4 698,717.4 698,714.3 697,714.3 697,714.9 696,714.9 696,718.1 695,718.1 695,718.5 694,718.5 694,723.7 693,723.7 693,719.3 692,719.3 692,716.4 691,716.4 691,715.7 690,715.7 690,715.2 689,715.2 689,716.6 688,716.6 688,715.6 687,715.6 687,717.2 686,717.2 686,716.8 685,716.8 685,719.6 684,719.6 684,718.0 683,718.0 683,711.8 682,711.8 682,719.3 681,719.3 681,720.6 680,720.6 680,718.7 679,718.7 679,715.5 678,715.5 678,726.5 677,726.5 677,723.0 676,723.0 676,723.9 675,723.9 675,715.1 674,715.1 674,720.3 673,720.3 673,718.6 672,718.6 672,726.5 671,726.5 671,718.9 670,718.9 670,720.6 669,720.6 669,719.7 668,719.7 668,717.1 667,717.1 667,718.1 666,718.1 666,726.6 665,726.6 665,722.2 664,722.2 664,716.2 663,716.2 663,717.9 662,717.9 662,714.5 661,714.5 661,715.2 660,715.2 660,716.7 659,716.7 659,720.3 658,720.3 658,714.3 657,714.3 657,720.5 656,720.5 656,718.4 655,718.4 655,716.9 654,716.9 654,718.7 653,718.7 653,715.5 652,715.5 652,725.6 651,725.6 651,718.3 650,718.3 650,717.8 649,717.8 649,716.5 648,716.5 648,725.5 647,725.5 647,715.0 646,715.0 646,719.1 645,719.1 645,722.7 644,722.7 644,726.8 643,726.8 643,726.8 642,726.8 642,714.7 641,714.7 641,711.1 640,711.1 640,717.5 639,717.5 639,722.4 638,722.4 638,717.7 637,717.7 637,717.5 636,717.5 636,712.2 635,712.2 635,721.3 634,721.3 634,715.2 633,715.2 633,718.0 632,718.0 632,720.2 631,720.2 631,719.7 630,719.7 630,717.3 629,717.3 629,717.1 628,717.1 628,719.8 627,719.8 627,717.8 626,717.8 626,718.7 625,718.7 625,720.5 624,720.5 624,721.0 623,721.0 623,720.3 622,720.3 622,717.3 621,717.3 621,718.8 620,718.8 620,720.4 619,720.4 619,715.4 618,715.4 618,718.8 617,718.8 617,716.1 616,716.1 616,718.2 615,718.2 615,718.6 614,718.6 614,719.1 613,719.1 613,715.4 612,715.4 612,714.0 611,714.0 611,715.0 610,715.0 610,717.9 609,717.9 609,711.1 608,711.1 608,714.2 607,714.2 607,718.4 606,718.4 606,717.1 605,717.1 605,727.1 604,727.1 604,716.6 603,716.6 603,718.4 602,718.4 602,713.8 601,713.8 601,715.4 600,715.4 600,717.3 599,717.3 599,726.2 598,726.2 598,722.3 597,722.3 597,714.3 596,714.3 596,715.7 595,715.7 595,717.3 594,717.3 594,725.5 593,725.5 593,719.1 592,719.1 592,720.4 591,720.4 591,718.0 590,718.0 590,718.9 589,718.9 589,713.8 588,713.8 588,715.2 587,715.2 587,715.4 586,715.4 586,721.1 585,721.1 585,713.7 584,713.7 584,718.9 583,718.9 583,716.7 582,716.7 582,714.8 581,714.8 581,718.5 580,718.5 580,716.3 579,716.3 579,721.2 578,721.2 578,716.6 577,716.6 577,723.2 576,723.2 576,717.6 575,717.6 575,720.1 574,720.1 574,715.6 573,715.6 573,716.8 572,716.8 572,719.3 571,719.3 571,724.6 570,724.6 570,718.9 569,718.9 569,720.6 568,720.6 568,712.4 567,712.4 567,721.6 566,721.6 566,718.2 565,718.2 565,718.2 564,718.2 564,717.0 563,717.0 563,715.7 562,715.7 562,714.9 561,714.9 561,718.5 560,718.5 560,718.8 559,718.8 559,727.7 558,727.7 558,720.9 557,720.9 557,726.3 556,726.3 556,719.8 555,719.8 555,717.6 554,717.6 554,720.1 553,720.1 553,721.4 552,721.4 552,721.1 551,721.1 551,718.9 550,718.9 550,723.6 549,723.6 549,719.7 548,719.7 548,720.2 547,720.2 547,716.7 546,716.7 546,718.9 545,718.9 545,720.7 544,720.7 544,725.7 543,725.7 543,716.3 542,716.3 542,718.0 541,718.0 541,713.6 540,713.6 540,720.2 539,720.2 539,714.0 538,714.0 538,711.9 537,711.9 537,715.1 536,715.1 536,719.3 535,719.3 535,724.2 534,724.2 534,717.5 533,717.5 533,720.4 532,720.4 532,716.5 531,716.5 531,721.5 530,721.5 530,726.6 529,726.6 529,715.8 528,715.8 528,718.6 527,718.6 527,716.4 526,716.4 526,715.5 525,715.5 525,718.3 524,718.3 524,712.8 523,712.8 523,715.8 522,715.8 522,722.4 521,722.4 521,724.7 520,724.7 520,713.6 519,713.6 519,719.3 518,719.3 518,718.7 517,718.7 517,720.9 516,720.9 516,717.2 515,717.2 515,727.5 514,727.5 514,719.2 513,719.2 513,720.2 512,720.2 512,717.5 511,717.5 511,716.3 510,716.3 510,720.9 509,720.9 509,723.9 508,723.9 508,715.5 507,715.5 507,713.3 506,713.3 506,717.2 505,717.2 505,721.9 504,721.9 504,716.1 503,716.1 503,718.0 502,718.0 502,723.8 501,723.8 501,719.5 500,719.5 500,713.8 499,713.8 499,713.7 498,713.7 498,713.5 497,713.5 497,718.6 496,718.6 496,715.6 495,715.6 495,717.2 494,717.2 494,712.0 493,712.0 493,718.7 492,718.7 492,713.7 491,713.7 491,717.5 490,717.5 490,718.9 489,718.9 489,717.2 488,717.2 488,718.6 487,718.6 487,713.4 486,713.4 486,718.3 485,718.3 485,718.6 484,718.6 484,717.8 483,717.8 483,715.4 482,715.4 482,716.1 481,716.1 481,722.0 480,722.0 480,717.9 479,717.9 479,715.0 478,715.0 478,720.3 477,720.3 477,722.1 476,722.1 476,722.8 475,722.8 475,717.1 474,717.1 474,711.5 473,711.5 473,720.7 472,720.7 472,715.9 471,715.9 471,719.8 470,719.8 470,716.2 469,716.2 469,720.9 468,720.9 468,720.8 467,720.8 467,722.0 466,722.0 466,724.2 465,724.2 465,719.3 464,719.3 464,721.5 463,721.5 463,716.6 462,716.6 462,725.8 461,725.8 461,712.4 460,712.4 460,716.6 459,716.6 459,714.1 458,714.1 458,725.1 457,725.1 457,723.9 456,723.9 456,719.0 455,719.0 455,717.5 454,717.5 454,718.6 453,718.6 453,715.5 452,715.5 452,718.1 451,718.1 451,716.6 450,716.6 450,717.9 449,717.9 449,718.6 448,718.6 448,719.5 447,719.5 447,723.5 446,723.5 446,717.1 445,717.1 445,716.7 444,716.7 444,716.5 443,716.5 443,717.0 442,717.0 442,716.4 441,716.4 441,717.4 440,717.4 440,714.7 439,714.7 439,717.3 438,717.3 438,718.7 437,718.7 437,720.0 436,720.0 436,718.1 435,718.1 435,715.9 434,715.9 434,714.0 433,714.0 433,715.6 432,715.6 432,720.2 431,720.2 431,719.3 430,719.3 430,716.6 429,716.6 429,715.0 428,715.0 428,716.4 427,716.4 427,721.0 426,721.0 426,718.7 425,718.7 425,721.5 424,721.5 424,719.2 423,719.2 423,718.4 422,718.4 422,719.9 421,719.9 421,720.3 420,720.3 420,713.3 419,713.3 419,717.6 418,717.6 418,717.6 417,717.6 417,716.4 416,716.4 416,717.9 415,717.9 415,720.3 414,720.3 414,713.6 413,713.6 413,721.1 412,721.1 412,719.7 411,719.7 411,718.0 410,718.0 410,719.9 409,719.9 409,723.2 408,723.2 408,723.2 407,723.2 407,721.1 406,721.1 406,722.5 405,722.5 405,725.1 404,725.1 404,717.9 403,717.9 403,720.6 402,720.6 402,722.0 401,722.0 401,718.6 400,718.6 400,716.4 399,716.4 399,716.1 398,716.1 398,713.9 397,713.9 397,729.3 396,729.3 396,724.6 395,724.6 395,716.1 394,716.1 394,718.8 393,718.8 393,723.4 392,723.4 392,721.2 391,721.2 391,717.5 390,717.5 390,720.7 389,720.7 389,717.4 388,717.4 388,723.4 387,723.4 387,712.9 386,712.9 386,717.1 385,717.1 385,715.8 384,715.8 384,714.1 383,714.1 383,720.0 382,720.0 382,717.8 381,717.8 381,715.6 380,715.6 380,718.2 379,718.2 379,714.9 378,714.9 378,721.0 377,721.0 377,712.9 376,712.9 376,719.5 375,719.5 375,713.4 374,713.4 374,724.3 373,724.3 373,718.6 372,718.6 372,714.8 371,714.8 371,718.2 370,718.2 370,716.7 369,716.7 369,722.2 368,722.2 368,724.2 367,724.2 367,710.2 366,710.2 366,719.0 365,719.0 365,722.9 364,722.9 364,715.8 363,715.8 363,713.7 362,713.7 362,719.2 361,719.2 361,716.3 360,716.3 360,717.3 359,717.3 359,715.7 358,715.7 358,719.3 357,719.3 357,720.9 356,720.9 356,716.9 355,716.9 355,718.3 354,718.3 354,717.0 353,717.0 353,714.5 352,714.5 352,716.6 351,716.6 351,723.1 350,723.1 350,716.5 349,716.5 349,716.8 348,716.8 348,720.6 347,720.6 347,719.9 346,719.9 346,720.7 345,720.7 345,718.3 344,718.3 344,714.6 343,714.6 343,718.9 342,718.9 342,720.9 341,720.9 341,718.0 340,718.0 340,725.1 339,725.1 339,717.0 338,717.0 338,715.7 337,715.7 337,726.5 336,726.5 336,714.3 335,714.3 335,716.9 334,716.9 334,720.7 333,720.7 333,716.4 332,716.4 332,726.5 331,726.5 331,713.3 330,713.3 330,718.7 329,718.7 329,720.2 328,720.2 328,717.5 327,717.5 327,722.2 326,722.2 326,715.4 325,715.4 325,717.4 324,717.4 324,715.2 323,715.2 323,718.5 322,718.5 322,717.7 321,717.7 321,713.6 320,713.6 320,716.8 319,716.8 319,718.2 318,718.2 318,728.4 317,728.4 317,717.2 316,717.2 316,720.4 315,720.4 315,717.5 314,717.5 314,723.3 313,723.3 313,719.7 312,719.7 312,719.5 311,719.5 311,719.6 310,719.6 310,716.0 309,716.0 309,715.2 308,715.2 308,718.3 307,718.3 307,725.2 306,725.2 306,714.9 305,714.9 305,722.7 304,722.7 304,718.4 303,718.4 303,715.7 302,715.7 302,716.3 301,716.3 301,721.1 300,721.1 300,716.1 299,716.1 299,717.8 298,717.8 298,715.3 297,715.3 297,712.8 296,712.8 296,716.4 295,716.4 295,716.9 294,716.9 294,711.5 293,711.5 293,721.2 292,721.2 292,715.5 291,715.5 291,713.9 290,713.9 290,723.5 289,723.5 289,723.0 288,723.0 288,714.3 287,714.3 287,721.0 286,721.0 286,720.3 285,720.3 285,715.5 284,715.5 284,716.0 283,716.0 283,717.3 282,717.3 282,716.5 281,716.5 281,730.2 280,730.2 280,724.4 279,724.4 279,720.9 278,720.9 278,721.4 277,721.4 277,716.0 276,716.0 276,714.2 275,714.2 275,718.6 274,718.6 274,716.5 273,716.5 273,711.1 272,711.1 272,717.1 271,717.1 271,715.2 270,715.2 270,716.5 269,716.5 269,714.8 268,714.8 268,718.1 267,718.1 267,716.3 266,716.3 266,723.4 265,723.4 265,721.7 264,721.7 264,717.6 263,717.6 263,718.9 262,718.9 262,722.6 261,722.6" fill="#e1e100"/><rect x="819" y="494" width="1" height="564" fill="#e1e100" /><rect x="819" y="576" width="2" height="201" fill="#e1e100" /><path d="M818.3 660 L819 618.0 H821 L821.7 660 V725 L821 751.0 H819 L818.3 725 Z" fill="#e1e100"/><rect x="813" y="665.6654462011545" width="1" height="11.334553798845459" fill="#e1e100" /><rect x="813" y="711" width="1" height="9.36722613465939" fill="#e1e100" /><rect x="814" y="664.211097753355" width="1" height="12.788902246644934" fill="#e1e100" /><rect x="814" y="711" width="1" height="8.462759756773668" fill="#e1e100" /><rect x="815" y="662.8951112718354" width="1" height="14.104888728164648" fill="#e1e100" /><rect x="815" y="711" width="1" height="8.091925909604713" fill="#e1e100" /><rect x="816" y="663.8976028140393" width="1" height="13.102397185960752" fill="#e1e100" /><rect x="816" y="711" width="1" height="14.400829299134575" fill="#e1e100" /><rect x="817" y="664.0906681707341" width="1" height="12.90933182926588" fill="#e1e100" /><rect x="817" y="711" width="1" height="11.754099762961637" fill="#e1e100" /><rect x="818" y="660.4092652610402" width="1" height="16.590734738959796" fill="#e1e100" /><rect x="818" y="711" width="1" height="11.570438022376116" fill="#e1e100" /><rect x="821" y="660.6870103369035" width="1" height="16.31298966309651" fill="#e1e100" /><rect x="821" y="711" width="1" height="13.893760837164937" fill="#e1e100" /><rect x="822" y="665.9058819676608" width="1" height="11.094118032339187" fill="#e1e100" /><rect x="822" y="711" width="1" height="14.250678262594004" fill="#e1e100" /><rect x="823" y="666.6424852113284" width="1" height="10.357514788671565" fill="#e1e100" /><rect x="823" y="711" width="1" height="11.482678430332706" fill="#e1e100" /><rect x="824" y="666.1935679307746" width="1" height="10.806432069225352" fill="#e1e100" /><rect x="824" y="711" width="1" height="8.0384164664354" fill="#e1e100" /><rect x="825" y="667.805027027761" width="1" height="9.19497297223904" fill="#e1e100" /><rect x="825" y="711" width="1" height="9.494350835379288" fill="#e1e100" /><rect x="843" y="528" width="1" height="314" fill="#e1e100" /><rect x="843" y="618" width="2" height="212" fill="#e1e100" /><path d="M842.3 660 L843 639.0 H845 L845.7 660 V725 L845 777.5 H843 L842.3 725 Z" fill="#e1e100"/><rect x="837" y="666.0008040769369" width="1" height="10.999195923063146" fill="#e1e100" /><rect x="837" y="711" width="1" height="8.147043527091933" fill="#e1e100" /><rect x="838" y="664.5202684802159" width="1" height="12.479731519784064" fill="#e1e100" /><rect x="838" y="711" width="1" height="11.136742555870539" fill="#e1e100" /><rect x="839" y="662.3680341796788" width="1" height="14.631965820321152" fill="#e1e100" /><rect x="839" y="711" width="1" height="10.662636481560204" fill="#e1e100" /><rect x="840" y="664.7817816578079" width="1" height="12.21821834219218" fill="#e1e100" /><rect x="840" y="711" width="1" height="11.74078259710825" fill="#e1e100" /><rect x="841" y="658.6398941416485" width="1" height="18.36010585835154" fill="#e1e100" /><rect x="841" y="711" width="1" height="14.476835303434616" fill="#e1e100" /><rect x="842" y="659.639501476083" width="1" height="17.360498523917094" fill="#e1e100" /><rect x="842" y="711" width="1" height="16.875574053786917" fill="#e1e100" /><rect x="845" y="662.9332039755233" width="1" height="14.066796024476703" fill="#e1e100" /><rect x="845" y="711" width="1" height="13.191853566505475" fill="#e1e100" /><rect x="846" y="661.1952846916831" width="1" height="15.804715308316926" fill="#e1e100" /><rect x="846" y="711" width="1" height="9.744645802533014" fill="#e1e100" /><rect x="847" y="662.7054787509348" width="1" height="14.29452124906512" fill="#e1e100" /><rect x="847" y="711" width="1" height="8.123033059484278" fill="#e1e100" /><rect x="848" y="665.486017516151" width="1" height="11.513982483848913" fill="#e1e100" /><rect x="848" y="711" width="1" height="9.65573673296996" fill="#e1e100" /><rect x="849" y="667.6342217959836" width="1" height="9.36577820401633" fill="#e1e100" /><rect x="849" y="711" width="1" height="9.30499557828395" fill="#e1e100" /><rect x="868" y="530" width="1" height="442" fill="#e1e100" /><rect x="868" y="597" width="2" height="223" fill="#e1e100" /><path d="M867.3 660 L868 628.5 H870 L870.7 660 V725 L870 772.5 H868 L867.3 725 Z" fill="#e1e100"/><rect x="862" y="666.9015841047541" width="1" height="10.098415895245914" fill="#e1e100" /><rect x="862" y="711" width="1" height="7.46266577035721" fill="#e1e100" /><rect x="863" y="665.9565739562732" width="1" height="11.043426043726779" fill="#e1e100" /><rect x="863" y="711" width="1" height="9.717709905353338" fill="#e1e100" /><rect x="864" y="664.8548453676499" width="1" height="12.145154632350057" fill="#e1e100" /><rect x="864" y="711" width="1" height="8.014587032877351" fill="#e1e100" /><rect x="865" y="665.9225986849406" width="1" height="11.077401315059387" fill="#e1e100" /><rect x="865" y="711" width="1" height="12.957537203318536" fill="#e1e100" /><rect x="866" y="665.011063997" width="1" height="11.988936003000031" fill="#e1e100" /><rect x="866" y="711" width="1" height="10.91596227378862" fill="#e1e100" /><rect x="867" y="658.4340343536157" width="1" height="18.565965646384278" fill="#e1e100" /><rect x="867" y="711" width="1" height="17.039166908297076" fill="#e1e100" /><rect x="870" y="659.3880147682944" width="1" height="17.611985231705553" fill="#e1e100" /><rect x="870" y="711" width="1" height="10.308729334616928" fill="#e1e100" /><rect x="871" y="666.4675664126639" width="1" height="10.532433587336119" fill="#e1e100" /><rect x="871" y="711" width="1" height="13.214087304998944" fill="#e1e100" /><rect x="872" y="664.0054629874886" width="1" height="12.994537012511435" fill="#e1e100" /><rect x="872" y="711" width="1" height="9.822540026902558" fill="#e1e100" /><rect x="873" y="667.430531874478" width="1" height="9.56946812552198" fill="#e1e100" /><rect x="873" y="711" width="1" height="9.118120994329576" fill="#e1e100" /><rect x="874" y="667.4071330830147" width="1" height="9.59286691698524" fill="#e1e100" /><rect x="874" y="711" width="1" height="8.469916945432669" fill="#e1e100" /><rect x="894" y="536" width="1" height="481" fill="#e1e100" /><rect x="894" y="570" width="2" height="230" fill="#e1e100" /><path d="M893.3 660 L894 615.0 H896 L896.7 660 V725 L896 762.5 H894 L893.3 725 Z" fill="#e1e100"/><rect x="888" y="665.5483668697782" width="1" height="11.451633130221797" fill="#e1e100" /><rect x="888" y="711" width="1" height="7.523375308737444" fill="#e1e100" /><rect x="889" y="667.218590128065" width="1" height="9.781409871934997" fill="#e1e100" /><rect x="889" y="711" width="1" height="10.104472513204731" fill="#e1e100" /><rect x="890" y="666.4616996411154" width="1" height="10.53830035888466" fill="#e1e100" /><rect x="890" y="711" width="1" height="9.1147704012246" fill="#e1e100" /><rect x="891" y="663.7550384428023" width="1" height="13.244961557197758" fill="#e1e100" /><rect x="891" y="711" width="1" height="14.662959761595634" fill="#e1e100" /><rect x="892" y="663.5675166900343" width="1" height="13.432483309965729" fill="#e1e100" /><rect x="892" y="711" width="1" height="11.368939406885046" fill="#e1e100" /><rect x="893" y="661.342253039204" width="1" height="15.657746960795986" fill="#e1e100" /><rect x="893" y="711" width="1" height="10.920392781184663" fill="#e1e100" /><rect x="896" y="662.9827728827863" width="1" height="14.017227117213626" fill="#e1e100" /><rect x="896" y="711" width="1" height="14.252155633131258" fill="#e1e100" /><rect x="897" y="664.4748527807918" width="1" height="12.52514721920814" fill="#e1e100" /><rect x="897" y="711" width="1" height="13.477296919001418" fill="#e1e100" /><rect x="898" y="666.0781687745717" width="1" height="10.921831225428303" fill="#e1e100" /><rect x="898" y="711" width="1" height="8.507682549934902" fill="#e1e100" /><rect x="899" y="665.148090717474" width="1" height="11.851909282525932" fill="#e1e100" /><rect x="899" y="711" width="1" height="9.198465092883879" fill="#e1e100" /><rect x="900" y="665.7046538983651" width="1" height="11.295346101634927" fill="#e1e100" /><rect x="900" y="711" width="1" height="7.262831096970976" fill="#e1e100" /><rect x="1265" y="496" width="1" height="485" fill="#e1e100" /><rect x="1265" y="569" width="2" height="179" fill="#e1e100" /><path d="M1264.3 660 L1265 614.5 H1267 L1267.7 660 V725 L1267 736.5 H1265 L1264.3 725 Z" fill="#e1e100"/><rect x="1259" y="666.1344017900446" width="1" height="10.865598209955316" fill="#e1e100" /><rect x="1259" y="711" width="1" height="8.674576006752499" fill="#e1e100" /><rect x="1260" y="666.1111391004304" width="1" height="10.888860899569675" fill="#e1e100" /><rect x="1260" y="711" width="1" height="7.981151251605477" fill="#e1e100" /><rect x="1261" y="663.9406855972067" width="1" height="13.059314402793309" fill="#e1e100" /><rect x="1261" y="711" width="1" height="11.791238643685517" fill="#e1e100" /><rect x="1262" y="663.5460308260908" width="1" height="13.453969173909146" fill="#e1e100" /><rect x="1262" y="711" width="1" height="11.453150792859603" fill="#e1e100" /><rect x="1263" y="660.8571928886603" width="1" height="16.142807111339742" fill="#e1e100" /><rect x="1263" y="711" width="1" height="13.570361666282992" fill="#e1e100" /><rect x="1264" y="661.7959335793488" width="1" height="15.204066420651188" fill="#e1e100" /><rect x="1264" y="711" width="1" height="11.128330065942567" fill="#e1e100" /><rect x="1267" y="662.522739625285" width="1" height="14.477260374714998" fill="#e1e100" /><rect x="1267" y="711" width="1" height="13.123668322073584" fill="#e1e100" /><rect x="1268" y="660.8970208708217" width="1" height="16.102979129178323" fill="#e1e100" /><rect x="1268" y="711" width="1" height="14.717616279487784" fill="#e1e100" /><rect x="1269" y="664.2160983771174" width="1" height="12.783901622882572" fill="#e1e100" /><rect x="1269" y="711" width="1" height="9.642781994210988" fill="#e1e100" /><rect x="1270" y="666.6647323520086" width="1" height="10.335267647991381" fill="#e1e100" /><rect x="1270" y="711" width="1" height="9.864238718938562" fill="#e1e100" /><rect x="1271" y="666.1538794704376" width="1" height="10.846120529562384" fill="#e1e100" /><rect x="1271" y="711" width="1" height="7.619480320173159" fill="#e1e100" /><rect x="1292" y="534" width="1" height="331" fill="#e1e100" /><rect x="1292" y="650" width="2" height="89" fill="#e1e100" /><path d="M1291.3 660 L1292 655.0 H1294 L1294.7 660 V725 L1294 732.0 H1292 L1291.3 725 Z" fill="#e1e100"/><rect x="1286" y="666.2741076905759" width="1" height="10.725892309424152" fill="#e1e100" /><rect x="1286" y="711" width="1" height="9.498048876568523" fill="#e1e100" /><rect x="1287" y="666.0318576217566" width="1" height="10.96814237824349" fill="#e1e100" /><rect x="1287" y="711" width="1" height="11.020573857088882" fill="#e1e100" /><rect x="1288" y="664.8169789709565" width="1" height="12.18302102904347" fill="#e1e100" /><rect x="1288" y="711" width="1" height="11.260939560383186" fill="#e1e100" /><rect x="1289" y="661.0838529084315" width="1" height="15.916147091568462" fill="#e1e100" /><rect x="1289" y="711" width="1" height="9.770966940921845" fill="#e1e100" /><rect x="1290" y="663.4085753876225" width="1" height="13.591424612377523" fill="#e1e100" /><rect x="1290" y="711" width="1" height="16.380786947781615" fill="#e1e100" /><rect x="1291" y="664.9290463114388" width="1" height="12.070953688561236" fill="#e1e100" /><rect x="1291" y="711" width="1" height="12.179091373690044" fill="#e1e100" /><rect x="1294" y="662.4263415422151" width="1" height="14.573658457784843" fill="#e1e100" /><rect x="1294" y="711" width="1" height="14.58635028799805" fill="#e1e100" /><rect x="1295" y="662.5589464768951" width="1" height="14.441053523104916" fill="#e1e100" /><rect x="1295" y="711" width="1" height="14.311386689519173" fill="#e1e100" /><rect x="1296" y="663.6517983574929" width="1" height="13.34820164250705" fill="#e1e100" /><rect x="1296" y="711" width="1" height="8.007551103949343" fill="#e1e100" /><rect x="1297" y="667.2325274186306" width="1" height="9.767472581369312" fill="#e1e100" /><rect x="1297" y="711" width="1" height="7.637229846454607" fill="#e1e100" /><rect x="1298" y="666.9208893256649" width="1" height="10.079110674335098" fill="#e1e100" /><rect x="1298" y="711" width="1" height="7.067579727325966" fill="#e1e100" /><rect x="1319" y="540" width="1" height="322" fill="#e1e100" /><rect x="1319" y="614" width="2" height="161" fill="#e1e100" /><path d="M1318.3 660 L1319 637.0 H1321 L1321.7 660 V725 L1321 750.0 H1319 L1318.3 725 Z" fill="#e1e100"/><rect x="1313" y="666.685046603166" width="1" height="10.314953396833937" fill="#e1e100" /><rect x="1313" y="711" width="1" height="8.581461245684915" fill="#e1e100" /><rect x="1314" y="666.7414533880817" width="1" height="10.258546611918346" fill="#e1e100" /><rect x="1314" y="711" width="1" height="10.710553797263065" fill="#e1e100" /><rect x="1315" y="664.9319710908329" width="1" height="12.068028909167104" fill="#e1e100" /><rect x="1315" y="711" width="1" height="12.799692675824172" fill="#e1e100" /><rect x="1316" y="664.2637170045896" width="1" height="12.736282995410425" fill="#e1e100" /><rect x="1316" y="711" width="1" height="12.374754309314286" fill="#e1e100" /><rect x="1317" y="661.9359199219199" width="1" height="15.064080078080115" fill="#e1e100" /><rect x="1317" y="711" width="1" height="10.972552120789533" fill="#e1e100" /><rect x="1318" y="658.6764394480872" width="1" height="18.323560551912813" fill="#e1e100" /><rect x="1318" y="711" width="1" height="9.535184822885421" fill="#e1e100" /><rect x="1321" y="664.1281873049704" width="1" height="12.871812695029586" fill="#e1e100" /><rect x="1321" y="711" width="1" height="11.405418329550248" fill="#e1e100" /><rect x="1322" y="660.9865988173781" width="1" height="16.01340118262189" fill="#e1e100" /><rect x="1322" y="711" width="1" height="11.628704058840876" fill="#e1e100" /><rect x="1323" y="666.8173762609799" width="1" height="10.182623739020034" fill="#e1e100" /><rect x="1323" y="711" width="1" height="9.495218799030074" fill="#e1e100" /><rect x="1324" y="665.2141566376964" width="1" height="11.785843362303556" fill="#e1e100" /><rect x="1324" y="711" width="1" height="10.533034353079445" fill="#e1e100" /><rect x="1325" y="667.7273421655495" width="1" height="9.272657834450493" fill="#e1e100" /><rect x="1325" y="711" width="1" height="8.948216966567433" fill="#e1e100" /><rect x="801" y="309" width="3" height="766" fill="#f04646" /><polyline points="260.4,463.4 264.7,510.6 266.8,494.5 269.0,444.1 274.3,475.2 278.6,487.0 281.8,514.9 286.1,485.9 290.4,487.0 299.0,396.8 310.8,479.5 315.1,490.2 320.5,491.3 328.0,540.7 332.3,483.8 336.6,475.2 340.4,428.0 345.2,481.6 349.5,492.4 357.0,538.5 361.3,490.2 364.9,476.3 370.9,495.6 374.1,495.6 378.4,481.6 382.7,446.2 387.0,451.6 398.8,477.3 403.1,465.5 405.3,520.3 410.6,614.7 416.0,557.8 424.6,553.6 427.8,517.1 432.1,529.9 436.4,505.3 440.7,503.1 449.3,534.2 456.8,473.0 461.1,512.8 469.7,514.9 474.0,460.2 478.3,450.5 482.1,480.6 486.4,440.8 491.2,458.0 495.0,489.1 498.7,477.3 503.0,498.8 506.2,440.8 510.5,414.0 520.0,466.6 524.3,453.7 527.5,487.0 532.9,498.8 537.2,516.0 540.4,514.9 544.7,502.0 553.3,523.5 556.5,557.8 566.2,522.4 571.6,507.4 573.7,478.4 578.0,477.3 582.3,507.4 587.7,480.6 590.9,498.8 595.2,426.9 599.5,449.4 603.3,501.0 607.6,470.9 612.3,464.5 616.6,432.3 620.5,417.2 624.1,470.9 628.4,479.5 632.7,473.0 637.0,492.4 640.3,485.9 644.5,494.5 649.3,473.0 653.1,532.1 658.5,518.1 662.8,470.9 666.0,503.1 670.3,479.5 677.8,470.9 690.7,521.4 695.0,463.4 702.5,516.0 707.9,499.9 716.5,492.4 719.7,452.7 724.0,487.0 729.3,498.8 732.6,451.6 737.9,446.2 741.2,468.8 745.0,445.1 749.7,487.0 754.0,443.0 758.3,429.0 762.6,488.1 765.7,451.6 770.0,379.7 774.3,465.5 779.0,453.7 787.2,476.3 791.9,476.3 795.4,414.0 800.1,422.6 807.6,488.1 816.2,445.1 819.4,460.2 824.1,419.4 829.1,455.9 833.4,448.4 841.3,493.4 845.6,432.3 854.8,503.1 862.3,537.5 870.9,520.3 874.8,444.1 879.1,463.4 883.8,432.3 887.7,455.9 892.4,452.7 901.0,455.9 907.9,522.4 912.8,485.9 916.0,512.8 929.3,439.8 933.2,524.6 937.1,473.0 940.7,473.0 945.0,480.6 950.4,470.9 957.9,504.2 966.5,420.5 970.8,452.7 975.1,443.0 980.0,485.9 983.6,487.0 987.9,467.7 990.7,484.9 996.5,428.0 1004.0,437.6 1008.8,423.7 1012.6,455.9 1015.7,447.3 1021.1,482.7 1025.4,454.8 1032.9,452.7 1037.2,497.7 1042.6,496.7 1050.1,511.7 1058.2,431.2 1061.2,438.7 1067.3,438.7 1071.1,492.4 1075.4,475.2 1079.1,497.7 1084.0,455.9 1092.6,475.2 1096.9,430.1 1104.2,480.6 1109.1,456.9 1112.3,456.9 1117.1,472.0 1120.9,460.2 1125.2,420.5 1129.1,463.4 1133.4,431.2 1145.6,509.5 1149.3,501.0 1154.2,466.6 1158.5,507.4 1163.4,475.2 1171.4,440.8 1175.0,461.2 1178.9,425.8 1183.2,440.8 1187.9,394.7 1192.2,424.7 1199.9,402.2 1204.2,441.9 1207.9,426.9 1213.2,470.9 1217.5,479.5 1221.4,499.9 1233.6,456.9 1237.9,487.0 1246.5,502.0 1249.7,489.1 1254.0,525.6 1259.4,428.0 1262.6,452.7 1266.8,432.3 1271.1,485.9 1275.4,451.6 1279.0,461.2 1284.6,446.2 1290.4,492.4 1292.6,493.4 1296.2,462.3 1300.1,467.7 1308.7,512.8 1313.4,503.1 1317.3,516.0 1325.4,488.1 1329.1,492.4 1334.4,456.9 1338.3,484.9 1341.9,469.8 1346.2,487.0 1355.5,408.6 1359.1,440.8 1367.1,454.8 1370.9,470.9 1375.7,431.2 1380.6,433.3 1384.2,487.0 1388.5,468.8 1392.8,497.7 1395.6,497.7 1400.6,480.6 1405.3,507.4 1410.0,488.1 1413.4,494.5 1417.7,465.5 1422.0,487.0 1425.7,420.5 1429.3,452.7 1433.6,446.2 1441.8,503.1 1446.1,493.4 1455.1,425.8 1459.0,450.5 1462.8,431.2 1467.5,465.5 1471.8,468.8 1476.1,496.7 1480.4,440.8 1483.6,473.0 1487.3,475.2 1492.2,493.4 1500.8,433.3 1506.2,436.6 1510.5,455.9 1512.6,504.2 1516.8,460.2 1520.5,484.9 1529.7,449.4 1534.0,455.9 1538.3,447.3 1542.6,426.9 1546.2,478.4 1554.8,429.0 1559.7,417.2 1567.3,439.8 1572.6,448.4 1576.9,449.4 1580.1,470.9 1584.4,417.2 1587.7,473.0 1591.9,439.8 1596.2,488.1 1605.5,493.4 1609.1,432.3 1613.4,452.7 1622.0,416.2 1626.3,474.1 1629.9,451.6 1633.8,468.8 1638.5,425.8 1647.1,381.8 1655.3,462.3 1662.8,412.9 1668.6,428.0 1676.3,479.5 1680.0,446.2 1687.9,426.9 1692.8,461.2 1697.1,459.1 1700.8,497.7 1705.1,455.9 1712.8,490.2 1718.0,474.1 1722.3,482.7 1730.0,437.6 1733.6,447.3 1740.1,440.8 1743.7,448.4 1747.2,422.6 1749.7,494.5 1750.8,518.1 1751.0,519.1 1755.3,542.2 1759.0,525.5 1762.8,529.8 1772.5,512.7 1776.2,527.7 1779.4,504.1 1785.3,494.4 1789.1,490.1 1791.8,494.4 1793.4,505.1 1797.2,486.9 1802.0,508.9 1805.7,508.4 1809.5,496.6 1814.3,493.3 1819.2,514.3" fill="none" stroke="#4196f0" stroke-width="2" stroke-linejoin="miter" stroke-miterlimit="2" /></g><g transform="translate(1754.1,326.0) scale(0.92,1)"><text x="0" y="0" font-size="12" fill="#ffffff" text-anchor="end" font-weight="normal" >Pressure</text></g><rect x="1765.5" y="313.5" width="28.5" height="18.5" fill="#000" stroke="#dcdcdc" stroke-width="1"/><polyline points="1767.0,326.2 1780.3,315.7 1792.2,326.2" fill="none" stroke="#4196f0" stroke-width="2" stroke-linejoin="miter" stroke-miterlimit="2" /><g transform="translate(1754.1,349.0) scale(0.92,1)"><text x="0" y="0" font-size="12" fill="#ffffff" text-anchor="end" font-weight="normal" >Acceleration</text></g><rect x="1765.5" y="336.5" width="28.5" height="18.5" fill="#000" stroke="#dcdcdc" stroke-width="1"/><polyline points="1767.0,350.0 1777.3,339.1 1787.7,350.0 1792.2,345.0" fill="none" stroke="#d8d840" stroke-width="0.8" stroke-linejoin="miter" stroke-miterlimit="2" /><g transform="translate(1754.1,372.0) scale(0.92,1)"><text x="0" y="0" font-size="12" fill="#ffffff" text-anchor="end" font-weight="normal" >EV1</text></g><rect x="1765.5" y="359.5" width="28.5" height="18.5" fill="#000" stroke="#dcdcdc" stroke-width="1"/><rect x="1767" y="370.0" width="3.2" height="6" fill="#1a74d8" /><rect x="1782.8" y="361.5" width="5.4" height="15" fill="#1a74d8" /><g transform="translate(1754.1,395.0) scale(0.92,1)"><text x="0" y="0" font-size="12" fill="#ffffff" text-anchor="end" font-weight="normal" >EV2</text></g><rect x="1765.5" y="382.5" width="28.5" height="18.5" fill="#000" stroke="#dcdcdc" stroke-width="1"/><rect x="1767" y="393.0" width="3.2" height="6" fill="#1a8a58" /><rect x="1782.8" y="384.5" width="5.4" height="15" fill="#1a8a58" /><g transform="translate(1754.1,418.0) scale(0.92,1)"><text x="0" y="0" font-size="12" fill="#ffffff" text-anchor="end" font-weight="normal" >EV3</text></g><rect x="1765.5" y="405.5" width="28.5" height="18.5" fill="#000" stroke="#dcdcdc" stroke-width="1"/><rect x="1767" y="416.0" width="3.2" height="6" fill="#c06818" /><rect x="1782.8" y="407.5" width="5.4" height="15" fill="#c06818" /><g transform="translate(1754.1,441.0) scale(0.92,1)"><text x="0" y="0" font-size="12" fill="#ffffff" text-anchor="end" font-weight="normal" >EV4</text></g><rect x="1765.5" y="428.5" width="28.5" height="18.5" fill="#000" stroke="#dcdcdc" stroke-width="1"/><rect x="1767" y="439.0" width="3.2" height="6" fill="#d020d0" /><rect x="1782.8" y="430.5" width="5.4" height="15" fill="#d020d0" /><g transform="translate(1754.1,464.0) scale(0.92,1)"><text x="0" y="0" font-size="12" fill="#ffffff" text-anchor="end" font-weight="normal" >EV5</text></g><rect x="1765.5" y="451.5" width="28.5" height="18.5" fill="#000" stroke="#dcdcdc" stroke-width="1"/><rect x="1767" y="462.0" width="3.2" height="6" fill="#f0a830" /><rect x="1782.8" y="453.5" width="5.4" height="15" fill="#f0a830" /><g transform="translate(1754.1,487.0) scale(0.92,1)"><text x="0" y="0" font-size="12" fill="#ffffff" text-anchor="end" font-weight="normal" >EV6</text></g><rect x="1765.5" y="474.5" width="28.5" height="18.5" fill="#000" stroke="#dcdcdc" stroke-width="1"/><rect x="1767" y="485.0" width="3.2" height="6" fill="#4040e0" /><rect x="1782.8" y="476.5" width="5.4" height="15" fill="#4040e0" /><g transform="translate(249.9,696.7) scale(0.92,1)"><text x="0" y="0" font-size="12" fill="#000" text-anchor="end" font-weight="normal" >0</text></g><rect x="252" y="691.5" width="4.8" height="1.2" fill="#000" /><g transform="translate(1832.7,314.4) scale(0.92,1)"><text x="0" y="0" font-size="12" fill="#000" text-anchor="start" font-weight="normal" >0</text></g><rect x="1827" y="310" width="4" height="1.2" fill="#000" /><g transform="translate(1833.6,1078.5) scale(0.92,1)"><text x="0" y="0" font-size="12" fill="#000" text-anchor="start" font-weight="normal" >0</text></g><rect x="1827" y="1074" width="4" height="1.2" fill="#000" /><g transform="translate(1847,692) rotate(90)"><g transform="scale(0.92,1)"><text x="0" y="0" font-size="12" text-anchor="middle" fill="#000">Pressure</text></g></g><rect x="258.4" y="1077" width="1.2" height="4.8" fill="#000" /><g transform="translate(259.4,1094) scale(0.875,1)"><text x="0" y="0" font-size="12" fill="#000" text-anchor="middle" font-weight="normal" >18:05:36</text></g><rect x="311.4" y="1077" width="1.2" height="4.8" fill="#000" /><g transform="translate(311.57,1094) scale(0.875,1)"><text x="0" y="0" font-size="12" fill="#000" text-anchor="middle" font-weight="normal" >18:05:38</text></g><rect x="363.4" y="1077" width="1.2" height="4.8" fill="#000" /><g transform="translate(363.74,1094) scale(0.875,1)"><text x="0" y="0" font-size="12" fill="#000" text-anchor="middle" font-weight="normal" >18:05:40</text></g><rect x="415.4" y="1077" width="1.2" height="4.8" fill="#000" /><g transform="translate(415.90999999999997,1094) scale(0.875,1)"><text x="0" y="0" font-size="12" fill="#000" text-anchor="middle" font-weight="normal" >18:05:42</text></g><rect x="467.4" y="1077" width="1.2" height="4.8" fill="#000" /><g transform="translate(468.08,1094) scale(0.875,1)"><text x="0" y="0" font-size="12" fill="#000" text-anchor="middle" font-weight="normal" >18:05:44</text></g><rect x="519.4" y="1077" width="1.2" height="4.8" fill="#000" /><g transform="translate(520.25,1094) scale(0.875,1)"><text x="0" y="0" font-size="12" fill="#000" text-anchor="middle" font-weight="normal" >18:05:46</text></g><rect x="571.4" y="1077" width="1.2" height="4.8" fill="#000" /><g transform="translate(572.42,1094) scale(0.875,1)"><text x="0" y="0" font-size="12" fill="#000" text-anchor="middle" font-weight="normal" >18:05:48</text></g><rect x="624.4" y="1077" width="1.2" height="4.8" fill="#000" /><g transform="translate(624.5899999999999,1094) scale(0.875,1)"><text x="0" y="0" font-size="12" fill="#000" text-anchor="middle" font-weight="normal" >18:05:50</text></g><rect x="676.4" y="1077" width="1.2" height="4.8" fill="#000" /><g transform="translate(676.76,1094) scale(0.875,1)"><text x="0" y="0" font-size="12" fill="#000" text-anchor="middle" font-weight="normal" >18:05:52</text></g><rect x="728.4" y="1077" width="1.2" height="4.8" fill="#000" /><g transform="translate(728.9300000000001,1094) scale(0.875,1)"><text x="0" y="0" font-size="12" fill="#000" text-anchor="middle" font-weight="normal" >18:05:54</text></g><rect x="780.4" y="1077" width="1.2" height="4.8" fill="#000" /><g transform="translate(781.1,1094) scale(0.875,1)"><text x="0" y="0" font-size="12" fill="#000" text-anchor="middle" font-weight="normal" >18:05:56</text></g><rect x="832.4" y="1077" width="1.2" height="4.8" fill="#000" /><g transform="translate(833.27,1094) scale(0.875,1)"><text x="0" y="0" font-size="12" fill="#000" text-anchor="middle" font-weight="normal" >18:05:58</text></g><rect x="884.4" y="1077" width="1.2" height="4.8" fill="#000" /><g transform="translate(885.4399999999999,1094) scale(0.875,1)"><text x="0" y="0" font-size="12" fill="#000" text-anchor="middle" font-weight="normal" >18:06:00</text></g><rect x="937.4" y="1077" width="1.2" height="4.8" fill="#000" /><g transform="translate(937.61,1094) scale(0.875,1)"><text x="0" y="0" font-size="12" fill="#000" text-anchor="middle" font-weight="normal" >18:06:02</text></g><rect x="989.4" y="1077" width="1.2" height="4.8" fill="#000" /><g transform="translate(989.78,1094) scale(0.875,1)"><text x="0" y="0" font-size="12" fill="#000" text-anchor="middle" font-weight="normal" >18:06:04</text></g><rect x="1041.4" y="1077" width="1.2" height="4.8" fill="#000" /><g transform="translate(1041.95,1094) scale(0.875,1)"><text x="0" y="0" font-size="12" fill="#000" text-anchor="middle" font-weight="normal" >18:06:06</text></g><rect x="1093.4" y="1077" width="1.2" height="4.8" fill="#000" /><g transform="translate(1094.12,1094) scale(0.875,1)"><text x="0" y="0" font-size="12" fill="#000" text-anchor="middle" font-weight="normal" >18:06:08</text></g><rect x="1145.4" y="1077" width="1.2" height="4.8" fill="#000" /><g transform="translate(1146.29,1094) scale(0.875,1)"><text x="0" y="0" font-size="12" fill="#000" text-anchor="middle" font-weight="normal" >18:06:10</text></g><rect x="1197.4" y="1077" width="1.2" height="4.8" fill="#000" /><g transform="translate(1198.46,1094) scale(0.875,1)"><text x="0" y="0" font-size="12" fill="#000" text-anchor="middle" font-weight="normal" >18:06:12</text></g><rect x="1250.4" y="1077" width="1.2" height="4.8" fill="#000" /><g transform="translate(1250.63,1094) scale(0.875,1)"><text x="0" y="0" font-size="12" fill="#000" text-anchor="middle" font-weight="normal" >18:06:14</text></g><rect x="1302.4" y="1077" width="1.2" height="4.8" fill="#000" /><g transform="translate(1302.8000000000002,1094) scale(0.875,1)"><text x="0" y="0" font-size="12" fill="#000" text-anchor="middle" font-weight="normal" >18:06:16</text></g><rect x="1354.4" y="1077" width="1.2" height="4.8" fill="#000" /><g transform="translate(1354.9699999999998,1094) scale(0.875,1)"><text x="0" y="0" font-size="12" fill="#000" text-anchor="middle" font-weight="normal" >18:06:18</text></g><rect x="1406.4" y="1077" width="1.2" height="4.8" fill="#000" /><g transform="translate(1407.1399999999999,1094) scale(0.875,1)"><text x="0" y="0" font-size="12" fill="#000" text-anchor="middle" font-weight="normal" >18:06:20</text></g><rect x="1458.4" y="1077" width="1.2" height="4.8" fill="#000" /><g transform="translate(1459.31,1094) scale(0.875,1)"><text x="0" y="0" font-size="12" fill="#000" text-anchor="middle" font-weight="normal" >18:06:22</text></g><rect x="1510.4" y="1077" width="1.2" height="4.8" fill="#000" /><g transform="translate(1511.48,1094) scale(0.875,1)"><text x="0" y="0" font-size="12" fill="#000" text-anchor="middle" font-weight="normal" >18:06:24</text></g><rect x="1563.4" y="1077" width="1.2" height="4.8" fill="#000" /><g transform="translate(1563.65,1094) scale(0.875,1)"><text x="0" y="0" font-size="12" fill="#000" text-anchor="middle" font-weight="normal" >18:06:26</text></g><rect x="1615.4" y="1077" width="1.2" height="4.8" fill="#000" /><g transform="translate(1615.8200000000002,1094) scale(0.875,1)"><text x="0" y="0" font-size="12" fill="#000" text-anchor="middle" font-weight="normal" >18:06:28</text></g><rect x="1667.4" y="1077" width="1.2" height="4.8" fill="#000" /><g transform="translate(1667.9900000000002,1094) scale(0.875,1)"><text x="0" y="0" font-size="12" fill="#000" text-anchor="middle" font-weight="normal" >18:06:30</text></g><rect x="1719.4" y="1077" width="1.2" height="4.8" fill="#000" /><g transform="translate(1720.1599999999999,1094) scale(0.875,1)"><text x="0" y="0" font-size="12" fill="#000" text-anchor="middle" font-weight="normal" >18:06:32</text></g><rect x="1771.4" y="1077" width="1.2" height="4.8" fill="#000" /><g transform="translate(1772.33,1094) scale(0.875,1)"><text x="0" y="0" font-size="12" fill="#000" text-anchor="middle" font-weight="normal" >18:06:34</text></g><rect x="1823.4" y="1077" width="1.2" height="4.8" fill="#000" /><g transform="translate(1824.5,1094) scale(0.875,1)"><text x="0" y="0" font-size="12" fill="#000" text-anchor="middle" font-weight="normal" >18:06:36</text></g><rect x="272" y="324" width="393" height="51" fill="#c4c4c4" /><rect x="275.8" y="327.8" width="385.4" height="43.4" fill="#ffffff" /><text x="283.5" y="361.5" font-size="31.5" fill="#000" textLength="370" lengthAdjust="spacingAndGlyphs">Pressure Response - Blue</text><rect x="272.5" y="750" width="359.0" height="50.5" fill="#c4c4c4" /><rect x="276.3" y="753.8" width="351.4" height="42.9" fill="#ffffff" /><text x="282" y="785.5" font-size="31.5" fill="#000" textLength="339" lengthAdjust="spacingAndGlyphs">Acoustic Profile - Yellow</text><rect x="962" y="748" width="343.5" height="51" fill="#c4c4c4" /><rect x="965.8" y="751.8" width="335.9" height="43.4" fill="#ffffff" /><text x="972.5" y="784.8" font-size="31.5" fill="#000" textLength="320.5" lengthAdjust="spacingAndGlyphs">Events - Colour Coded</text><rect x="187" y="1113" width="116" height="33" fill="#e1e1e1" /><path d="M200 1129.5 L207.5 1122.3 V1126.3 H214.2 V1132.8 H207.5 V1136.8 Z" fill="#3c72b8" stroke="#2a5590" stroke-width="0.6"/><g transform="translate(228,1134.8) scale(0.9,1)"><text x="0" y="0" font-size="12" fill="#000" text-anchor="start" font-weight="normal" >30secs</text></g><rect x="1788" y="1113" width="116" height="33" fill="#e1e1e1" /><path d="M1891 1129.5 L1883.5 1122.3 V1126.3 H1877 V1132.8 H1883.5 V1136.8 Z" fill="#3c72b8" stroke="#2a5590" stroke-width="0.6"/><g transform="translate(1827,1134.8) scale(0.9,1)"><text x="0" y="0" font-size="12" fill="#000" text-anchor="start" font-weight="normal" >30Secs</text></g><rect x="1916" y="25" width="1" height="1133" fill="#a8b088" /><rect x="0" y="1158" width="1917" height="1" fill="#a8b088" /><rect x="0" y="1159" width="1917" height="1" fill="#eef4d4" /><rect x="0" y="1160" width="1917" height="4" fill="#080800" /><rect x="633" y="1160.5" width="49" height="3.5" fill="#303030" /></svg></body></html>
